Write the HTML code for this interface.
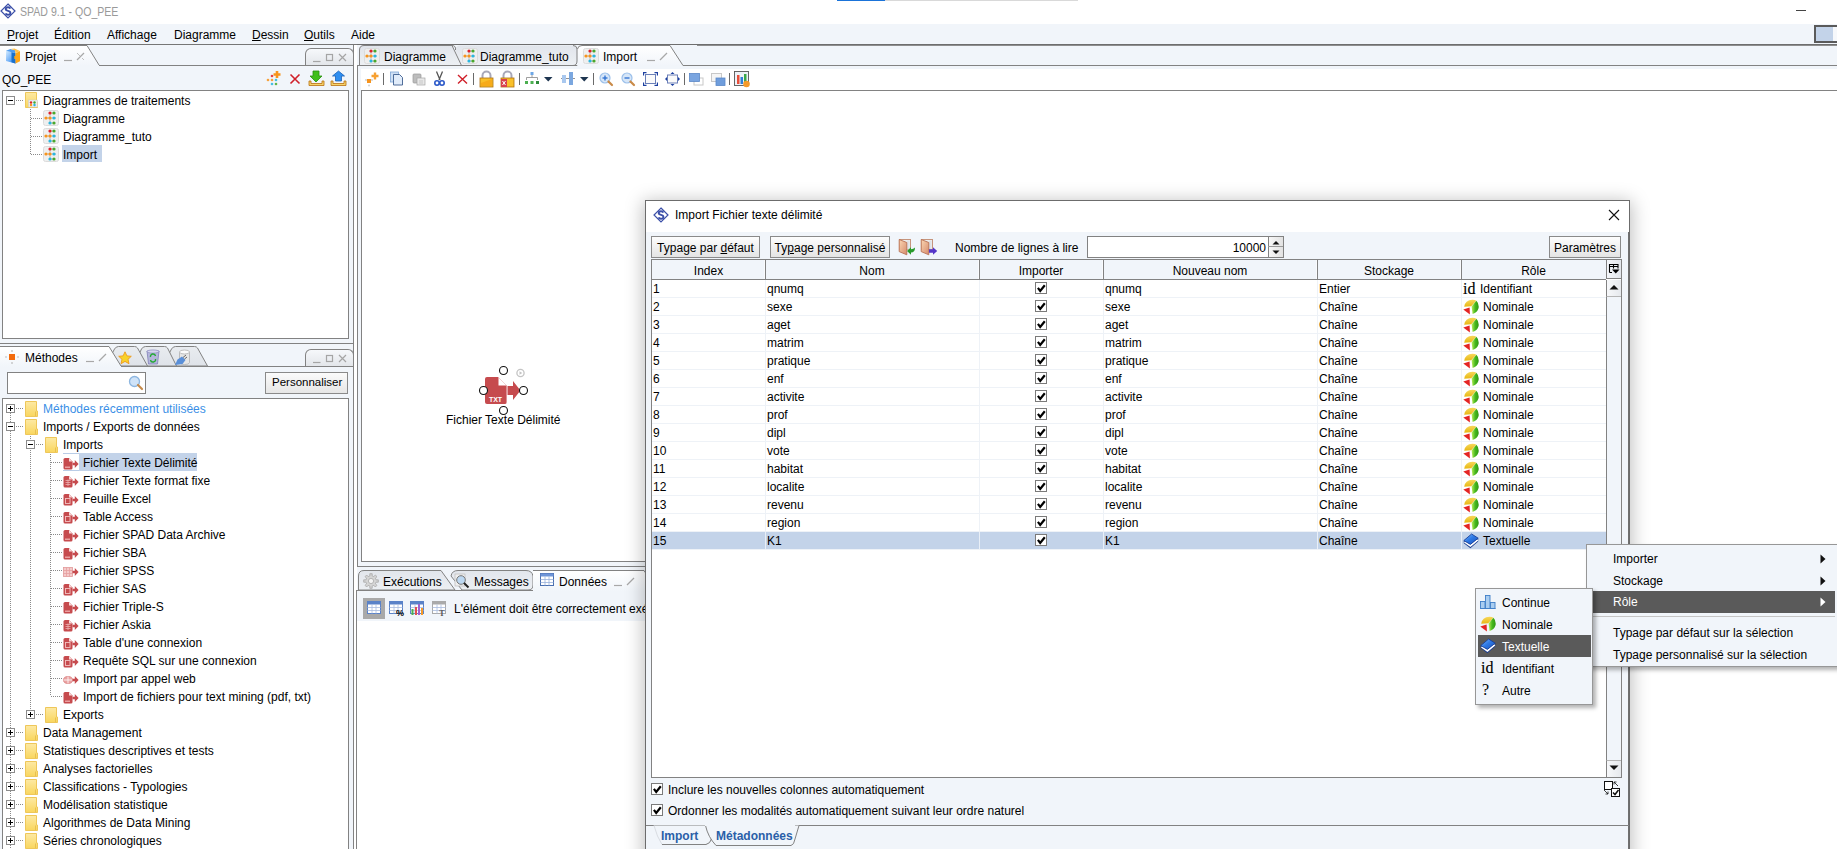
<!DOCTYPE html>
<html><head><meta charset="utf-8"><style>
html,body{margin:0;padding:0;}
body{width:1837px;height:849px;overflow:hidden;position:relative;background:#fff;font-family:"Liberation Sans", sans-serif;font-size:12px;color:#000;}
.t{position:absolute;white-space:nowrap;}
svg{display:block;}
</style></head><body>
<div style="position:absolute;left:0px;top:0px;width:1837px;height:24px;background:#fff"></div><svg style="position:absolute;left:0px;top:3px;" width="16" height="16" viewBox="0 0 16 16"><path d="M8 1 L15 8 L8 15 L1 8 Z" fill="#fff" stroke="#3b4fa8" stroke-width="1.2"/><path d="M10.3 5.6 Q9.8 4.3 8 4.3 Q5.7 4.3 5.7 6.1 Q5.7 7.5 8 7.9 Q10.4 8.3 10.4 10 Q10.4 11.8 8 11.8 Q6.1 11.8 5.6 10.4" fill="none" stroke="#3b4fa8" stroke-width="1.9"/></svg><div class="t" style="left:20px;top:4px;line-height:17px;color:#9a9a9a;font-size:12px;transform:scaleX(0.88);transform-origin:0 0;">SPAD 9.1 - QO_PEE</div><div style="position:absolute;left:837px;top:0px;width:48px;height:1px;background:#1a73d9"></div><div style="position:absolute;left:885px;top:0px;width:193px;height:1px;background:#d9d9d9"></div><div style="position:absolute;left:1796px;top:10px;width:10px;height:1px;background:#444"></div><div style="position:absolute;left:0px;top:24px;width:1837px;height:20px;background:#f1f5fa"></div><div class="t" style="left:7px;top:27px;line-height:17px;"><u>P</u>rojet</div><div class="t" style="left:54px;top:27px;line-height:17px;">Édition</div><div class="t" style="left:107px;top:27px;line-height:17px;">Affichage</div><div class="t" style="left:174px;top:27px;line-height:17px;">Diagramme</div><div class="t" style="left:252px;top:27px;line-height:17px;"><u>D</u>essin</div><div class="t" style="left:304px;top:27px;line-height:17px;"><u>O</u>utils</div><div class="t" style="left:351px;top:27px;line-height:17px;">Aide</div><div style="position:absolute;left:1814px;top:25px;width:23px;height:18px;background:#c3d3e9;border:2px solid #5a5a5a;border-right:none;box-sizing:border-box"></div><div style="position:absolute;left:1833px;top:27px;width:4px;height:14px;background:#f6f8fb"></div><div style="position:absolute;left:0px;top:44px;width:1837px;height:1px;background:#767676"></div><div style="position:absolute;left:0px;top:45px;width:353px;height:298px;background:#f1f5fa"></div><div style="position:absolute;left:0px;top:65px;width:353px;height:1px;background:#828282"></div><svg style="position:absolute;left:-1px;top:45px;" width="101" height="21" viewBox="0 0 101 21"><defs><linearGradient id="tg-145" x1="0" y1="0" x2="0" y2="1"><stop offset="0" stop-color="#fff"/><stop offset="1" stop-color="#f1f5fa"/></linearGradient></defs><path d="M0 0.5 H88 L100 20 V21 H0 Z" fill="url(#tg-145)"/><path d="M0 0.5 H88 L100 20" fill="none" stroke="#828282" stroke-width="1"/></svg><svg style="position:absolute;left:5px;top:48px;" width="16" height="16" viewBox="0 0 16 16"><defs><linearGradient id="cbg" x1="0" y1="0" x2="1" y2="1"><stop offset="0" stop-color="#d6ecff"/><stop offset="1" stop-color="#1f7ff0"/></linearGradient></defs><path d="M1 2.8L10.5 5.3V15.5L1 13Z" fill="url(#cbg)"/><path d="M6.5 4L10.5 5.3V15.5L6.5 14.3Z" fill="#1a70cc"/><path d="M10.5 5.3L15 3V13.2L10.5 15.5Z" fill="#ffa514"/><path d="M9.3 8H11.3V11H9.3Z" fill="#ffa514"/><path d="M1 2.8L5.5 1L10 2.3L10.5 5.3Z" fill="#4d9cf0"/><path d="M5.5 1L9.5 0.5L15 3L10.5 5.3L10 2.3Z" fill="#ffc04a"/></svg><div class="t" style="left:25px;top:49px;line-height:17px;">Projet</div><svg style="position:absolute;left:62px;top:50px;" width="26" height="14" viewBox="0 0 26 14"><path d="M2 10.5H10" stroke="#a8a8a8" stroke-width="1.2"/><path d="M15 10L22 3" stroke="#a8a8a8" stroke-width="1.2"/><path d="M15 3L18 6M20 8L22 10" stroke="#c0c0c0" stroke-width="1"/></svg><div style="position:absolute;left:305px;top:48px;width:49px;height:17px;box-sizing:border-box;border:1px solid #828282;border-bottom:none;border-radius:6px 6px 0 0;background:linear-gradient(#f6f8fb,#e3e6ea)"></div><svg style="position:absolute;left:305px;top:48px;" width="49" height="17" viewBox="0 0 49 17"><path d="M8 13.5H15.5" stroke="#a5a5a5" stroke-width="1.2"/><rect x="21.5" y="6.5" width="6" height="6" fill="none" stroke="#a5a5a5" stroke-width="1.2"/><path d="M34 6L41 13M41 6L34 13" stroke="#a5a5a5" stroke-width="1.2"/></svg><div style="position:absolute;left:353px;top:45px;width:1px;height:298px;background:#828282"></div><div class="t" style="left:2px;top:71px;line-height:18px;">QO_PEE</div><svg style="position:absolute;left:265px;top:70px;" width="17" height="17" viewBox="0 0 17 17"><g opacity="0.85"><circle cx="3" cy="10" r="1.3" fill="#f7941d"/><circle cx="7" cy="10" r="1.3" fill="#f7941d"/><circle cx="11" cy="10" r="1.3" fill="#29b6e0"/><circle cx="7" cy="14" r="1.3" fill="#29b6e0"/><circle cx="11" cy="14" r="1.3" fill="#49a82c"/><circle cx="7" cy="6" r="1.3" fill="#e0202a"/></g><path d="M12 1V8M8.5 4.5H15.5" stroke="#f7941d" stroke-width="2.6"/></svg><svg style="position:absolute;left:289px;top:73px;" width="12" height="12" viewBox="0 0 12 12"><path d="M1.5 1.5L10.5 10.5M10.5 1.5L1.5 10.5" stroke="#d0202a" stroke-width="1.6"/></svg><svg style="position:absolute;left:308px;top:70px;" width="17" height="17" viewBox="0 0 17 17"><path d="M5 1H11V6H14L8 12L2 6H5Z" fill="#3fbf1a" stroke="#2a8f10" stroke-width="0.8"/><path d="M1 11V15.5H16V11H14V13.5H3V11Z" fill="#f6d46a" stroke="#b76f10" stroke-width="0.8"/></svg><svg style="position:absolute;left:330px;top:70px;" width="17" height="17" viewBox="0 0 17 17"><path d="M8.5 1L14.5 6H11.5V11H5.5V6H2.5Z" fill="#2e8ef0" stroke="#1b62b8" stroke-width="0.8"/><path d="M1 11V15.5H16V11H14V13.5H3V11Z" fill="#f6d46a" stroke="#b76f10" stroke-width="0.8"/></svg><div style="position:absolute;left:2px;top:90px;width:347px;height:249px;background:#fff;border:1px solid #828282;box-sizing:border-box"></div><svg style="position:absolute;left:6px;top:96px;" width="9" height="9" viewBox="0 0 9 9"><rect x="0.5" y="0.5" width="8" height="8" fill="#fff" stroke="#8c8c8c"/><path d="M2 4.5H7" stroke="#000"/></svg><div style="position:absolute;left:16px;top:100px;width:8px;height:1px;background:repeating-linear-gradient(90deg,#8a8a8a 0 1px,transparent 1px 2px)"></div><svg style="position:absolute;left:25px;top:92px;" width="13" height="16" viewBox="0 0 13 16"><defs><linearGradient id="fg" x1="0" y1="0" x2="0" y2="1"><stop offset="0" stop-color="#fde9a4"/><stop offset="1" stop-color="#f9d65e"/></linearGradient></defs><path d="M0.5 0.5H11.5V10H12.5V15.5H0.5Z" fill="url(#fg)" stroke="#eec75a"/><path d="M10.5 10.5V15" stroke="#e8c050" stroke-width="1"/><rect x="3.5" y="8" width="9" height="7" fill="#eee" stroke="#ccc" stroke-width="0.5"/><circle cx="6" cy="10.5" r="1.2" fill="#e0202a"/><circle cx="9.5" cy="10.5" r="1.2" fill="#49a82c"/><circle cx="6" cy="13" r="1.2" fill="#f7941d"/><circle cx="9.5" cy="13" r="1.2" fill="#29b6e0"/></svg><div class="t" style="left:43px;top:92px;line-height:18px;">Diagrammes de traitements</div><div style="position:absolute;left:30px;top:109px;width:1px;height:46px;background:repeating-linear-gradient(180deg,#8a8a8a 0 1px,transparent 1px 2px)"></div><div style="position:absolute;left:31px;top:118px;width:11px;height:1px;background:repeating-linear-gradient(90deg,#8a8a8a 0 1px,transparent 1px 2px)"></div><svg style="position:absolute;left:43px;top:110px;" width="16" height="16" viewBox="0 0 16 16"><rect x="0.5" y="0.5" width="15" height="15" rx="2" fill="#efefef" stroke="#dcdcdc"/><path d="M3 8H13M7 3V13M7 3H11M7 13H11" stroke="#999" stroke-width="0.6"/><circle cx="7" cy="3" r="1.6" fill="#e0202a"/><circle cx="11" cy="3" r="1.6" fill="#49a82c"/><circle cx="3" cy="8" r="1.6" fill="#f7941d"/><circle cx="7" cy="8" r="1.6" fill="#f7941d"/><circle cx="11" cy="8" r="1.6" fill="#29b6e0"/><circle cx="7" cy="13" r="1.6" fill="#29b6e0"/><circle cx="11" cy="13" r="1.6" fill="#49a82c"/></svg><div class="t" style="left:63px;top:110px;line-height:18px;">Diagramme</div><div style="position:absolute;left:31px;top:136px;width:11px;height:1px;background:repeating-linear-gradient(90deg,#8a8a8a 0 1px,transparent 1px 2px)"></div><svg style="position:absolute;left:43px;top:128px;" width="16" height="16" viewBox="0 0 16 16"><rect x="0.5" y="0.5" width="15" height="15" rx="2" fill="#efefef" stroke="#dcdcdc"/><path d="M3 8H13M7 3V13M7 3H11M7 13H11" stroke="#999" stroke-width="0.6"/><circle cx="7" cy="3" r="1.6" fill="#e0202a"/><circle cx="11" cy="3" r="1.6" fill="#49a82c"/><circle cx="3" cy="8" r="1.6" fill="#f7941d"/><circle cx="7" cy="8" r="1.6" fill="#f7941d"/><circle cx="11" cy="8" r="1.6" fill="#29b6e0"/><circle cx="7" cy="13" r="1.6" fill="#29b6e0"/><circle cx="11" cy="13" r="1.6" fill="#49a82c"/></svg><div class="t" style="left:63px;top:128px;line-height:18px;">Diagramme_tuto</div><div style="position:absolute;left:31px;top:154px;width:11px;height:1px;background:repeating-linear-gradient(90deg,#8a8a8a 0 1px,transparent 1px 2px)"></div><svg style="position:absolute;left:43px;top:146px;" width="16" height="16" viewBox="0 0 16 16"><rect x="0.5" y="0.5" width="15" height="15" rx="2" fill="#efefef" stroke="#dcdcdc"/><path d="M3 8H13M7 3V13M7 3H11M7 13H11" stroke="#999" stroke-width="0.6"/><circle cx="7" cy="3" r="1.6" fill="#e0202a"/><circle cx="11" cy="3" r="1.6" fill="#49a82c"/><circle cx="3" cy="8" r="1.6" fill="#f7941d"/><circle cx="7" cy="8" r="1.6" fill="#f7941d"/><circle cx="11" cy="8" r="1.6" fill="#29b6e0"/><circle cx="7" cy="13" r="1.6" fill="#29b6e0"/><circle cx="11" cy="13" r="1.6" fill="#49a82c"/></svg><div style="position:absolute;left:62px;top:145px;width:40px;height:17px;background:#c3d3e9"></div><div class="t" style="left:63px;top:146px;line-height:18px;">Import</div><div style="position:absolute;left:0px;top:343px;width:353px;height:1px;background:#828282"></div><div style="position:absolute;left:0px;top:344px;width:353px;height:505px;background:#f1f5fa"></div><div style="position:absolute;left:353px;top:343px;width:1px;height:506px;background:#828282"></div><div style="position:absolute;left:0px;top:366px;width:353px;height:1px;background:#828282"></div><svg style="position:absolute;left:162px;top:346px;" width="47" height="21" viewBox="0 0 47 21"><defs><linearGradient id="tpdb" x1="0" y1="0" x2="0" y2="1"><stop offset="0" stop-color="#e9ecf0"/><stop offset="1" stop-color="#dfe3e9"/></linearGradient></defs><path d="M0.5 20 L9.5 3 Q11.0 0.5 13.5 0.5 H32.5 Q34.5 0.5 35.5 2 L45.5 20 Z" fill="url(#tpdb)" stroke="#828282" stroke-width="1"/></svg><svg style="position:absolute;left:133px;top:346px;" width="45" height="21" viewBox="0 0 45 21"><defs><linearGradient id="tprc" x1="0" y1="0" x2="0" y2="1"><stop offset="0" stop-color="#e9ecf0"/><stop offset="1" stop-color="#dfe3e9"/></linearGradient></defs><path d="M0.5 20 L8.5 3 Q10.0 0.5 12.5 0.5 H31.5 Q33.5 0.5 34.5 2 L43.5 20 Z" fill="url(#tprc)" stroke="#828282" stroke-width="1"/></svg><svg style="position:absolute;left:105px;top:346px;" width="44" height="21" viewBox="0 0 44 21"><defs><linearGradient id="tpst" x1="0" y1="0" x2="0" y2="1"><stop offset="0" stop-color="#e9ecf0"/><stop offset="1" stop-color="#dfe3e9"/></linearGradient></defs><path d="M0.5 20 L9.5 3 Q11.0 0.5 13.5 0.5 H29.5 Q31.5 0.5 32.5 2 L42.5 20 Z" fill="url(#tpst)" stroke="#828282" stroke-width="1"/></svg><svg style="position:absolute;left:-1px;top:346px;" width="123" height="21" viewBox="0 0 123 21"><defs><linearGradient id="tg-1346" x1="0" y1="0" x2="0" y2="1"><stop offset="0" stop-color="#fff"/><stop offset="1" stop-color="#f1f5fa"/></linearGradient></defs><path d="M0 0.5 H110 L122 20 V21 H0 Z" fill="url(#tg-1346)"/><path d="M0 0.5 H110 L122 20" fill="none" stroke="#828282" stroke-width="1"/></svg><svg style="position:absolute;left:4px;top:349px;" width="16" height="16" viewBox="0 0 16 16"><rect x="5" y="5" width="6" height="6" fill="#f36b0d"/><path d="M8 1V3M8 13V15M1 8H3M13 8H15" stroke="#bbb" stroke-width="1.2"/></svg><div class="t" style="left:25px;top:350px;line-height:17px;">Méthodes</div><svg style="position:absolute;left:84px;top:351px;" width="26" height="14" viewBox="0 0 26 14"><path d="M2 10.5H10" stroke="#a8a8a8" stroke-width="1.2"/><path d="M15 10L22 3" stroke="#a8a8a8" stroke-width="1.2"/></svg><svg style="position:absolute;left:118px;top:351px;" width="14" height="14" viewBox="0 0 14 14"><path d="M7 0.8L8.9 4.9L13.3 5.3L10 8.3L11 12.7L7 10.4L3 12.7L4 8.3L0.7 5.3L5.1 4.9Z" fill="#f8d22a" stroke="#ee9a1a" stroke-width="0.9"/></svg><svg style="position:absolute;left:146px;top:349px;" width="14" height="16" viewBox="0 0 14 16"><path d="M1 2H13L11.5 15H2.5Z" fill="#b5b5dc" stroke="#8080b8" stroke-width="0.8"/><ellipse cx="7" cy="2.5" rx="6" ry="1.6" fill="#d6d6ef" stroke="#8080b8" stroke-width="0.6"/><path d="M4.5 8A2.5 2.5 0 0 1 9.5 7M9.5 10A2.5 2.5 0 0 1 4.5 11" stroke="#22aa33" stroke-width="1.4" fill="none"/></svg><svg style="position:absolute;left:174px;top:349px;" width="18" height="17" viewBox="0 0 18 17"><path d="M5.5 3V13.5Q5.5 15.5 10.5 15.5Q15.5 15.5 15.5 13.5V3Z" fill="#e6e6e6" stroke="#b0b0b0" stroke-width="0.8"/><ellipse cx="10.5" cy="3" rx="5" ry="2" fill="#fbfbfb" stroke="#b0b0b0" stroke-width="0.8"/><path d="M1 16L3.5 10.5L8 7.5L11.5 11L8.5 15Z" fill="#5a8fd8"/><path d="M9 8.5L12 6M10.5 10L13 8" stroke="#666" stroke-width="1"/></svg><div style="position:absolute;left:305px;top:349px;width:49px;height:17px;box-sizing:border-box;border:1px solid #828282;border-bottom:none;border-radius:6px 6px 0 0;background:linear-gradient(#f6f8fb,#e3e6ea)"></div><svg style="position:absolute;left:305px;top:349px;" width="49" height="17" viewBox="0 0 49 17"><path d="M8 13.5H15.5" stroke="#a5a5a5" stroke-width="1.2"/><rect x="21.5" y="6.5" width="6" height="6" fill="none" stroke="#a5a5a5" stroke-width="1.2"/><path d="M34 6L41 13M41 6L34 13" stroke="#a5a5a5" stroke-width="1.2"/></svg><div style="position:absolute;left:7px;top:372px;width:139px;height:22px;background:#fff;border:1px solid #828282;box-sizing:border-box"></div><svg style="position:absolute;left:128px;top:375px;" width="16" height="16" viewBox="0 0 16 16"><circle cx="6.5" cy="6.5" r="5" fill="#cfe3f8" stroke="#8db6e0" stroke-width="1.3"/><path d="M10 10L14 14" stroke="#c58a4a" stroke-width="2.2" stroke-linecap="round"/></svg><div style="position:absolute;left:265px;top:372px;width:83px;height:22px;background:linear-gradient(#fbfbfb,#e6e6e6);border:1px solid #8a8a8a;box-sizing:border-box"></div><div class="t" style="left:272px;top:373px;line-height:18px;font-size:11.5px">Personnaliser</div><div style="position:absolute;left:2px;top:398px;width:347px;height:460px;background:#fff;border:1px solid #828282;box-sizing:border-box"></div><div style="position:absolute;left:10px;top:413px;width:1px;height:440px;background:repeating-linear-gradient(180deg,#8a8a8a 0 1px,transparent 1px 2px)"></div><div style="position:absolute;left:30px;top:434px;width:1px;height:280px;background:repeating-linear-gradient(180deg,#8a8a8a 0 1px,transparent 1px 2px)"></div><div style="position:absolute;left:50px;top:452px;width:1px;height:244px;background:repeating-linear-gradient(180deg,#8a8a8a 0 1px,transparent 1px 2px)"></div><svg style="position:absolute;left:6px;top:404px;" width="9" height="9" viewBox="0 0 9 9"><rect x="0.5" y="0.5" width="8" height="8" fill="#fff" stroke="#8c8c8c"/><path d="M2 4.5H7" stroke="#000"/><path d="M4.5 2V7" stroke="#000"/></svg><div style="position:absolute;left:16px;top:408px;width:8px;height:1px;background:repeating-linear-gradient(90deg,#8a8a8a 0 1px,transparent 1px 2px)"></div><svg style="position:absolute;left:25px;top:401px;" width="13" height="16" viewBox="0 0 13 16"><defs><linearGradient id="fg" x1="0" y1="0" x2="0" y2="1"><stop offset="0" stop-color="#fde9a4"/><stop offset="1" stop-color="#f9d65e"/></linearGradient></defs><path d="M0.5 0.5H11.5V10H12.5V15.5H0.5Z" fill="url(#fg)" stroke="#eec75a"/><path d="M10.5 10.5V15" stroke="#e8c050" stroke-width="1"/></svg><div class="t" style="left:43px;top:400px;line-height:18px;color:#3b8fe6">Méthodes récemment utilisées</div><svg style="position:absolute;left:6px;top:422px;" width="9" height="9" viewBox="0 0 9 9"><rect x="0.5" y="0.5" width="8" height="8" fill="#fff" stroke="#8c8c8c"/><path d="M2 4.5H7" stroke="#000"/></svg><div style="position:absolute;left:16px;top:426px;width:8px;height:1px;background:repeating-linear-gradient(90deg,#8a8a8a 0 1px,transparent 1px 2px)"></div><svg style="position:absolute;left:25px;top:419px;" width="13" height="16" viewBox="0 0 13 16"><defs><linearGradient id="fg" x1="0" y1="0" x2="0" y2="1"><stop offset="0" stop-color="#fde9a4"/><stop offset="1" stop-color="#f9d65e"/></linearGradient></defs><path d="M0.5 0.5H11.5V10H12.5V15.5H0.5Z" fill="url(#fg)" stroke="#eec75a"/><path d="M10.5 10.5V15" stroke="#e8c050" stroke-width="1"/></svg><div class="t" style="left:43px;top:418px;line-height:18px;">Imports / Exports de données</div><svg style="position:absolute;left:26px;top:440px;" width="9" height="9" viewBox="0 0 9 9"><rect x="0.5" y="0.5" width="8" height="8" fill="#fff" stroke="#8c8c8c"/><path d="M2 4.5H7" stroke="#000"/></svg><div style="position:absolute;left:36px;top:444px;width:8px;height:1px;background:repeating-linear-gradient(90deg,#8a8a8a 0 1px,transparent 1px 2px)"></div><svg style="position:absolute;left:45px;top:437px;" width="13" height="16" viewBox="0 0 13 16"><defs><linearGradient id="fg" x1="0" y1="0" x2="0" y2="1"><stop offset="0" stop-color="#fde9a4"/><stop offset="1" stop-color="#f9d65e"/></linearGradient></defs><path d="M0.5 0.5H11.5V10H12.5V15.5H0.5Z" fill="url(#fg)" stroke="#eec75a"/><path d="M10.5 10.5V15" stroke="#e8c050" stroke-width="1"/></svg><div class="t" style="left:63px;top:436px;line-height:18px;">Imports</div><div style="position:absolute;left:51px;top:462px;width:11px;height:1px;background:repeating-linear-gradient(90deg,#8a8a8a 0 1px,transparent 1px 2px)"></div><svg style="position:absolute;left:63px;top:456px;" width="16" height="14" viewBox="0 0 16 14"><path d="M0.5 3.5Q0.5 2 2 2H6L9.5 5.5V12Q9.5 13.5 8 13.5H2Q0.5 13.5 0.5 12Z" fill="#c64b4e"/><path d="M6 2V5.5H9.5Z" fill="#f8d6d6"/><path d="M9.5 6.8H11.8V4L15.6 8L11.8 12V9.2H9.5Z" fill="#c64b4e"/><rect x="2" y="10.5" width="5" height="1.5" fill="#e9a0a0"/></svg><div style="position:absolute;left:63px;top:453px;width:134px;height:18px;border-top:1px solid #b9cce6;border-bottom:1px solid #b9cce6;box-sizing:border-box"></div><div style="position:absolute;left:79px;top:453px;width:118px;height:18px;background:#c3d3e9"></div><div class="t" style="left:83px;top:454px;line-height:18px;">Fichier Texte Délimité</div><div style="position:absolute;left:51px;top:480px;width:11px;height:1px;background:repeating-linear-gradient(90deg,#8a8a8a 0 1px,transparent 1px 2px)"></div><svg style="position:absolute;left:63px;top:474px;" width="16" height="14" viewBox="0 0 16 14"><path d="M0.5 3.5Q0.5 2 2 2H6L9.5 5.5V12Q9.5 13.5 8 13.5H2Q0.5 13.5 0.5 12Z" fill="#c64b4e"/><path d="M6 2V5.5H9.5Z" fill="#f8d6d6"/><path d="M9.5 6.8H11.8V4L15.6 8L11.8 12V9.2H9.5Z" fill="#c64b4e"/><path d="M2.5 6.5H7.5M2.5 8.5H7.5M2.5 10.5H7.5M5 5.5V12" stroke="#eeb0b0" stroke-width="0.8"/></svg><div class="t" style="left:83px;top:472px;line-height:18px;">Fichier Texte format fixe</div><div style="position:absolute;left:51px;top:498px;width:11px;height:1px;background:repeating-linear-gradient(90deg,#8a8a8a 0 1px,transparent 1px 2px)"></div><svg style="position:absolute;left:63px;top:492px;" width="16" height="14" viewBox="0 0 16 14"><path d="M0.5 3.5Q0.5 2 2 2H6L9.5 5.5V12Q9.5 13.5 8 13.5H2Q0.5 13.5 0.5 12Z" fill="#c64b4e"/><path d="M6 2V5.5H9.5Z" fill="#f8d6d6"/><path d="M9.5 6.8H11.8V4L15.6 8L11.8 12V9.2H9.5Z" fill="#c64b4e"/><rect x="2.5" y="6.5" width="4.5" height="5" fill="none" stroke="#f3c0c0" stroke-width="0.9"/></svg><div class="t" style="left:83px;top:490px;line-height:18px;">Feuille Excel</div><div style="position:absolute;left:51px;top:516px;width:11px;height:1px;background:repeating-linear-gradient(90deg,#8a8a8a 0 1px,transparent 1px 2px)"></div><svg style="position:absolute;left:63px;top:510px;" width="16" height="14" viewBox="0 0 16 14"><path d="M0.5 3.5Q0.5 2 2 2H6L9.5 5.5V12Q9.5 13.5 8 13.5H2Q0.5 13.5 0.5 12Z" fill="#c64b4e"/><path d="M6 2V5.5H9.5Z" fill="#f8d6d6"/><path d="M9.5 6.8H11.8V4L15.6 8L11.8 12V9.2H9.5Z" fill="#c64b4e"/><rect x="2.5" y="6.5" width="4.5" height="5" fill="none" stroke="#f3c0c0" stroke-width="0.9"/></svg><div class="t" style="left:83px;top:508px;line-height:18px;">Table Access</div><div style="position:absolute;left:51px;top:534px;width:11px;height:1px;background:repeating-linear-gradient(90deg,#8a8a8a 0 1px,transparent 1px 2px)"></div><svg style="position:absolute;left:63px;top:528px;" width="16" height="14" viewBox="0 0 16 14"><path d="M0.5 3.5Q0.5 2 2 2H6L9.5 5.5V12Q9.5 13.5 8 13.5H2Q0.5 13.5 0.5 12Z" fill="#c64b4e"/><path d="M6 2V5.5H9.5Z" fill="#f8d6d6"/><path d="M9.5 6.8H11.8V4L15.6 8L11.8 12V9.2H9.5Z" fill="#c64b4e"/><rect x="2" y="10.5" width="5" height="1.5" fill="#e9a0a0"/></svg><div class="t" style="left:83px;top:526px;line-height:18px;">Fichier SPAD Data Archive</div><div style="position:absolute;left:51px;top:552px;width:11px;height:1px;background:repeating-linear-gradient(90deg,#8a8a8a 0 1px,transparent 1px 2px)"></div><svg style="position:absolute;left:63px;top:546px;" width="16" height="14" viewBox="0 0 16 14"><path d="M0.5 3.5Q0.5 2 2 2H6L9.5 5.5V12Q9.5 13.5 8 13.5H2Q0.5 13.5 0.5 12Z" fill="#c64b4e"/><path d="M6 2V5.5H9.5Z" fill="#f8d6d6"/><path d="M9.5 6.8H11.8V4L15.6 8L11.8 12V9.2H9.5Z" fill="#c64b4e"/><rect x="2" y="10.5" width="5" height="1.5" fill="#e9a0a0"/></svg><div class="t" style="left:83px;top:544px;line-height:18px;">Fichier SBA</div><div style="position:absolute;left:51px;top:570px;width:11px;height:1px;background:repeating-linear-gradient(90deg,#8a8a8a 0 1px,transparent 1px 2px)"></div><svg style="position:absolute;left:63px;top:564px;" width="16" height="14" viewBox="0 0 16 14"><rect x="0.5" y="3.5" width="9" height="9" fill="#f4caca" stroke="#e29a9a" stroke-width="0.8"/><path d="M0.5 6.5H9.5M0.5 9.5H9.5M3.5 3.5V12.5M6.5 3.5V12.5" stroke="#e6a0a0" stroke-width="0.8"/><path d="M9.5 6.8H11.8V4L15.6 8L11.8 12V9.2H9.5Z" fill="#c64b4e"/></svg><div class="t" style="left:83px;top:562px;line-height:18px;">Fichier SPSS</div><div style="position:absolute;left:51px;top:588px;width:11px;height:1px;background:repeating-linear-gradient(90deg,#8a8a8a 0 1px,transparent 1px 2px)"></div><svg style="position:absolute;left:63px;top:582px;" width="16" height="14" viewBox="0 0 16 14"><path d="M0.5 3.5Q0.5 2 2 2H6L9.5 5.5V12Q9.5 13.5 8 13.5H2Q0.5 13.5 0.5 12Z" fill="#c64b4e"/><path d="M6 2V5.5H9.5Z" fill="#f8d6d6"/><path d="M9.5 6.8H11.8V4L15.6 8L11.8 12V9.2H9.5Z" fill="#c64b4e"/><rect x="2.5" y="6.5" width="4.5" height="5" fill="none" stroke="#f3c0c0" stroke-width="0.9"/></svg><div class="t" style="left:83px;top:580px;line-height:18px;">Fichier SAS</div><div style="position:absolute;left:51px;top:606px;width:11px;height:1px;background:repeating-linear-gradient(90deg,#8a8a8a 0 1px,transparent 1px 2px)"></div><svg style="position:absolute;left:63px;top:600px;" width="16" height="14" viewBox="0 0 16 14"><path d="M0.5 3.5Q0.5 2 2 2H6L9.5 5.5V12Q9.5 13.5 8 13.5H2Q0.5 13.5 0.5 12Z" fill="#c64b4e"/><path d="M6 2V5.5H9.5Z" fill="#f8d6d6"/><path d="M9.5 6.8H11.8V4L15.6 8L11.8 12V9.2H9.5Z" fill="#c64b4e"/><rect x="2" y="10.5" width="5" height="1.5" fill="#e9a0a0"/></svg><div class="t" style="left:83px;top:598px;line-height:18px;">Fichier Triple-S</div><div style="position:absolute;left:51px;top:624px;width:11px;height:1px;background:repeating-linear-gradient(90deg,#8a8a8a 0 1px,transparent 1px 2px)"></div><svg style="position:absolute;left:63px;top:618px;" width="16" height="14" viewBox="0 0 16 14"><path d="M0.5 3.5Q0.5 2 2 2H6L9.5 5.5V12Q9.5 13.5 8 13.5H2Q0.5 13.5 0.5 12Z" fill="#c64b4e"/><path d="M6 2V5.5H9.5Z" fill="#f8d6d6"/><path d="M9.5 6.8H11.8V4L15.6 8L11.8 12V9.2H9.5Z" fill="#c64b4e"/><path d="M2.5 6.5H7.5M2.5 8.5H7.5M2.5 10.5H7.5M5 5.5V12" stroke="#eeb0b0" stroke-width="0.8"/></svg><div class="t" style="left:83px;top:616px;line-height:18px;">Fichier Askia</div><div style="position:absolute;left:51px;top:642px;width:11px;height:1px;background:repeating-linear-gradient(90deg,#8a8a8a 0 1px,transparent 1px 2px)"></div><svg style="position:absolute;left:63px;top:636px;" width="16" height="14" viewBox="0 0 16 14"><path d="M0.5 3.5Q0.5 2 2 2H6L9.5 5.5V12Q9.5 13.5 8 13.5H2Q0.5 13.5 0.5 12Z" fill="#c64b4e"/><path d="M6 2V5.5H9.5Z" fill="#f8d6d6"/><path d="M9.5 6.8H11.8V4L15.6 8L11.8 12V9.2H9.5Z" fill="#c64b4e"/><rect x="2.5" y="6.5" width="4.5" height="5" fill="none" stroke="#f3c0c0" stroke-width="0.9"/></svg><div class="t" style="left:83px;top:634px;line-height:18px;">Table d'une connexion</div><div style="position:absolute;left:51px;top:660px;width:11px;height:1px;background:repeating-linear-gradient(90deg,#8a8a8a 0 1px,transparent 1px 2px)"></div><svg style="position:absolute;left:63px;top:654px;" width="16" height="14" viewBox="0 0 16 14"><path d="M0.5 3.5Q0.5 2 2 2H6L9.5 5.5V12Q9.5 13.5 8 13.5H2Q0.5 13.5 0.5 12Z" fill="#c64b4e"/><path d="M6 2V5.5H9.5Z" fill="#f8d6d6"/><path d="M9.5 6.8H11.8V4L15.6 8L11.8 12V9.2H9.5Z" fill="#c64b4e"/><rect x="2.5" y="6.5" width="4.5" height="5" fill="none" stroke="#f3c0c0" stroke-width="0.9"/></svg><div class="t" style="left:83px;top:652px;line-height:18px;">Requête SQL sur une connexion</div><div style="position:absolute;left:51px;top:678px;width:11px;height:1px;background:repeating-linear-gradient(90deg,#8a8a8a 0 1px,transparent 1px 2px)"></div><svg style="position:absolute;left:63px;top:672px;" width="16" height="14" viewBox="0 0 16 14"><ellipse cx="5" cy="8" rx="4.5" ry="3.5" fill="#eaa2a2" stroke="#d98080" stroke-width="0.8"/><path d="M5 4.5V11.5M0.5 8H9.5" stroke="#fff" stroke-width="0.8"/><path d="M9.5 6.8H11.8V4L15.6 8L11.8 12V9.2H9.5Z" fill="#c64b4e"/></svg><div class="t" style="left:83px;top:670px;line-height:18px;">Import par appel web</div><div style="position:absolute;left:51px;top:696px;width:11px;height:1px;background:repeating-linear-gradient(90deg,#8a8a8a 0 1px,transparent 1px 2px)"></div><svg style="position:absolute;left:63px;top:690px;" width="16" height="14" viewBox="0 0 16 14"><path d="M0.5 3.5Q0.5 2 2 2H6L9.5 5.5V12Q9.5 13.5 8 13.5H2Q0.5 13.5 0.5 12Z" fill="#c64b4e"/><path d="M6 2V5.5H9.5Z" fill="#f8d6d6"/><path d="M9.5 6.8H11.8V4L15.6 8L11.8 12V9.2H9.5Z" fill="#c64b4e"/><rect x="2" y="10.5" width="5" height="1.5" fill="#e9a0a0"/></svg><div class="t" style="left:83px;top:688px;line-height:18px;">Import de fichiers pour text mining (pdf, txt)</div><svg style="position:absolute;left:26px;top:710px;" width="9" height="9" viewBox="0 0 9 9"><rect x="0.5" y="0.5" width="8" height="8" fill="#fff" stroke="#8c8c8c"/><path d="M2 4.5H7" stroke="#000"/><path d="M4.5 2V7" stroke="#000"/></svg><div style="position:absolute;left:36px;top:714px;width:8px;height:1px;background:repeating-linear-gradient(90deg,#8a8a8a 0 1px,transparent 1px 2px)"></div><svg style="position:absolute;left:45px;top:707px;" width="13" height="16" viewBox="0 0 13 16"><defs><linearGradient id="fg" x1="0" y1="0" x2="0" y2="1"><stop offset="0" stop-color="#fde9a4"/><stop offset="1" stop-color="#f9d65e"/></linearGradient></defs><path d="M0.5 0.5H11.5V10H12.5V15.5H0.5Z" fill="url(#fg)" stroke="#eec75a"/><path d="M10.5 10.5V15" stroke="#e8c050" stroke-width="1"/></svg><div class="t" style="left:63px;top:706px;line-height:18px;">Exports</div><svg style="position:absolute;left:6px;top:728px;" width="9" height="9" viewBox="0 0 9 9"><rect x="0.5" y="0.5" width="8" height="8" fill="#fff" stroke="#8c8c8c"/><path d="M2 4.5H7" stroke="#000"/><path d="M4.5 2V7" stroke="#000"/></svg><div style="position:absolute;left:16px;top:732px;width:8px;height:1px;background:repeating-linear-gradient(90deg,#8a8a8a 0 1px,transparent 1px 2px)"></div><svg style="position:absolute;left:25px;top:725px;" width="13" height="16" viewBox="0 0 13 16"><defs><linearGradient id="fg" x1="0" y1="0" x2="0" y2="1"><stop offset="0" stop-color="#fde9a4"/><stop offset="1" stop-color="#f9d65e"/></linearGradient></defs><path d="M0.5 0.5H11.5V10H12.5V15.5H0.5Z" fill="url(#fg)" stroke="#eec75a"/><path d="M10.5 10.5V15" stroke="#e8c050" stroke-width="1"/></svg><div class="t" style="left:43px;top:724px;line-height:18px;">Data Management</div><svg style="position:absolute;left:6px;top:746px;" width="9" height="9" viewBox="0 0 9 9"><rect x="0.5" y="0.5" width="8" height="8" fill="#fff" stroke="#8c8c8c"/><path d="M2 4.5H7" stroke="#000"/><path d="M4.5 2V7" stroke="#000"/></svg><div style="position:absolute;left:16px;top:750px;width:8px;height:1px;background:repeating-linear-gradient(90deg,#8a8a8a 0 1px,transparent 1px 2px)"></div><svg style="position:absolute;left:25px;top:743px;" width="13" height="16" viewBox="0 0 13 16"><defs><linearGradient id="fg" x1="0" y1="0" x2="0" y2="1"><stop offset="0" stop-color="#fde9a4"/><stop offset="1" stop-color="#f9d65e"/></linearGradient></defs><path d="M0.5 0.5H11.5V10H12.5V15.5H0.5Z" fill="url(#fg)" stroke="#eec75a"/><path d="M10.5 10.5V15" stroke="#e8c050" stroke-width="1"/></svg><div class="t" style="left:43px;top:742px;line-height:18px;">Statistiques descriptives et tests</div><svg style="position:absolute;left:6px;top:764px;" width="9" height="9" viewBox="0 0 9 9"><rect x="0.5" y="0.5" width="8" height="8" fill="#fff" stroke="#8c8c8c"/><path d="M2 4.5H7" stroke="#000"/><path d="M4.5 2V7" stroke="#000"/></svg><div style="position:absolute;left:16px;top:768px;width:8px;height:1px;background:repeating-linear-gradient(90deg,#8a8a8a 0 1px,transparent 1px 2px)"></div><svg style="position:absolute;left:25px;top:761px;" width="13" height="16" viewBox="0 0 13 16"><defs><linearGradient id="fg" x1="0" y1="0" x2="0" y2="1"><stop offset="0" stop-color="#fde9a4"/><stop offset="1" stop-color="#f9d65e"/></linearGradient></defs><path d="M0.5 0.5H11.5V10H12.5V15.5H0.5Z" fill="url(#fg)" stroke="#eec75a"/><path d="M10.5 10.5V15" stroke="#e8c050" stroke-width="1"/></svg><div class="t" style="left:43px;top:760px;line-height:18px;">Analyses factorielles</div><svg style="position:absolute;left:6px;top:782px;" width="9" height="9" viewBox="0 0 9 9"><rect x="0.5" y="0.5" width="8" height="8" fill="#fff" stroke="#8c8c8c"/><path d="M2 4.5H7" stroke="#000"/><path d="M4.5 2V7" stroke="#000"/></svg><div style="position:absolute;left:16px;top:786px;width:8px;height:1px;background:repeating-linear-gradient(90deg,#8a8a8a 0 1px,transparent 1px 2px)"></div><svg style="position:absolute;left:25px;top:779px;" width="13" height="16" viewBox="0 0 13 16"><defs><linearGradient id="fg" x1="0" y1="0" x2="0" y2="1"><stop offset="0" stop-color="#fde9a4"/><stop offset="1" stop-color="#f9d65e"/></linearGradient></defs><path d="M0.5 0.5H11.5V10H12.5V15.5H0.5Z" fill="url(#fg)" stroke="#eec75a"/><path d="M10.5 10.5V15" stroke="#e8c050" stroke-width="1"/></svg><div class="t" style="left:43px;top:778px;line-height:18px;">Classifications - Typologies</div><svg style="position:absolute;left:6px;top:800px;" width="9" height="9" viewBox="0 0 9 9"><rect x="0.5" y="0.5" width="8" height="8" fill="#fff" stroke="#8c8c8c"/><path d="M2 4.5H7" stroke="#000"/><path d="M4.5 2V7" stroke="#000"/></svg><div style="position:absolute;left:16px;top:804px;width:8px;height:1px;background:repeating-linear-gradient(90deg,#8a8a8a 0 1px,transparent 1px 2px)"></div><svg style="position:absolute;left:25px;top:797px;" width="13" height="16" viewBox="0 0 13 16"><defs><linearGradient id="fg" x1="0" y1="0" x2="0" y2="1"><stop offset="0" stop-color="#fde9a4"/><stop offset="1" stop-color="#f9d65e"/></linearGradient></defs><path d="M0.5 0.5H11.5V10H12.5V15.5H0.5Z" fill="url(#fg)" stroke="#eec75a"/><path d="M10.5 10.5V15" stroke="#e8c050" stroke-width="1"/></svg><div class="t" style="left:43px;top:796px;line-height:18px;">Modélisation statistique</div><svg style="position:absolute;left:6px;top:818px;" width="9" height="9" viewBox="0 0 9 9"><rect x="0.5" y="0.5" width="8" height="8" fill="#fff" stroke="#8c8c8c"/><path d="M2 4.5H7" stroke="#000"/><path d="M4.5 2V7" stroke="#000"/></svg><div style="position:absolute;left:16px;top:822px;width:8px;height:1px;background:repeating-linear-gradient(90deg,#8a8a8a 0 1px,transparent 1px 2px)"></div><svg style="position:absolute;left:25px;top:815px;" width="13" height="16" viewBox="0 0 13 16"><defs><linearGradient id="fg" x1="0" y1="0" x2="0" y2="1"><stop offset="0" stop-color="#fde9a4"/><stop offset="1" stop-color="#f9d65e"/></linearGradient></defs><path d="M0.5 0.5H11.5V10H12.5V15.5H0.5Z" fill="url(#fg)" stroke="#eec75a"/><path d="M10.5 10.5V15" stroke="#e8c050" stroke-width="1"/></svg><div class="t" style="left:43px;top:814px;line-height:18px;">Algorithmes de Data Mining</div><svg style="position:absolute;left:6px;top:836px;" width="9" height="9" viewBox="0 0 9 9"><rect x="0.5" y="0.5" width="8" height="8" fill="#fff" stroke="#8c8c8c"/><path d="M2 4.5H7" stroke="#000"/><path d="M4.5 2V7" stroke="#000"/></svg><div style="position:absolute;left:16px;top:840px;width:8px;height:1px;background:repeating-linear-gradient(90deg,#8a8a8a 0 1px,transparent 1px 2px)"></div><svg style="position:absolute;left:25px;top:833px;" width="13" height="16" viewBox="0 0 13 16"><defs><linearGradient id="fg" x1="0" y1="0" x2="0" y2="1"><stop offset="0" stop-color="#fde9a4"/><stop offset="1" stop-color="#f9d65e"/></linearGradient></defs><path d="M0.5 0.5H11.5V10H12.5V15.5H0.5Z" fill="url(#fg)" stroke="#eec75a"/><path d="M10.5 10.5V15" stroke="#e8c050" stroke-width="1"/></svg><div class="t" style="left:43px;top:832px;line-height:18px;">Séries chronologiques</div><div style="position:absolute;left:357px;top:45px;width:1480px;height:521px;background:#f1f5fa"></div><div style="position:absolute;left:357px;top:44px;width:1480px;height:1px;background:#6e6e6e"></div><div style="position:absolute;left:357px;top:65px;width:1480px;height:1px;background:#828282"></div><div style="position:absolute;left:357px;top:45px;width:1px;height:521px;background:#828282"></div><div style="position:absolute;left:363px;top:45px;width:1474px;height:1px;background:#8e8e8e"></div><svg style="position:absolute;left:357px;top:44px;" width="340" height="23" viewBox="0 0 340 23"><defs><linearGradient id="cti" x1="0" y1="0" x2="0" y2="1"><stop offset="0" stop-color="#e1e5eb"/><stop offset="1" stop-color="#edf0f4"/></linearGradient><linearGradient id="cta" x1="0" y1="0" x2="0" y2="1"><stop offset="0" stop-color="#ffffff"/><stop offset="1" stop-color="#f1f5fa"/></linearGradient></defs><rect x="0" y="1" width="340" height="20.5" fill="#f1f5fa"/><path d="M2.5 21.5 V6 Q2.5 1.5 7 1.5 H95 L104.5 21.5 Z" fill="url(#cti)"/><path d="M98 6 Q99 1.5 103 1.5 H216 Q220 1.5 220 5 V17 Q220 21.5 216 21.5 H104.5 Z" fill="url(#cti)"/><path d="M220.5 5 Q221 1.5 225 1.5 H313 L326 21.5 V22 H220.5 Z" fill="url(#cta)"/><path d="M2.5 21.5 V6 Q2.5 1.5 7 1.5 H95 L104.5 21.5" fill="none" stroke="#828282"/><path d="M95 1.5 Q99 1.5 98.5 6" fill="none" stroke="#828282"/><path d="M216 1.5 Q220 1.5 220 5 V17 Q220 21.5 216 21.5" fill="none" stroke="#828282"/><path d="M220.5 5 Q221 1.5 225 1.5 H313 L326 21.5 H340" fill="none" stroke="#828282"/><path d="M0 21.5 H220" stroke="#828282"/></svg><svg style="position:absolute;left:364px;top:48px;" width="16" height="16" viewBox="0 0 16 16"><rect x="0.5" y="0.5" width="15" height="15" rx="2" fill="#efefef" stroke="#dcdcdc"/><path d="M3 8H13M7 3V13M7 3H11M7 13H11" stroke="#999" stroke-width="0.6"/><circle cx="7" cy="3" r="1.6" fill="#e0202a"/><circle cx="11" cy="3" r="1.6" fill="#49a82c"/><circle cx="3" cy="8" r="1.6" fill="#f7941d"/><circle cx="7" cy="8" r="1.6" fill="#f7941d"/><circle cx="11" cy="8" r="1.6" fill="#29b6e0"/><circle cx="7" cy="13" r="1.6" fill="#29b6e0"/><circle cx="11" cy="13" r="1.6" fill="#49a82c"/></svg><div class="t" style="left:384px;top:49px;line-height:17px;">Diagramme</div><svg style="position:absolute;left:462px;top:48px;" width="16" height="16" viewBox="0 0 16 16"><rect x="0.5" y="0.5" width="15" height="15" rx="2" fill="#efefef" stroke="#dcdcdc"/><path d="M3 8H13M7 3V13M7 3H11M7 13H11" stroke="#999" stroke-width="0.6"/><circle cx="7" cy="3" r="1.6" fill="#e0202a"/><circle cx="11" cy="3" r="1.6" fill="#49a82c"/><circle cx="3" cy="8" r="1.6" fill="#f7941d"/><circle cx="7" cy="8" r="1.6" fill="#f7941d"/><circle cx="11" cy="8" r="1.6" fill="#29b6e0"/><circle cx="7" cy="13" r="1.6" fill="#29b6e0"/><circle cx="11" cy="13" r="1.6" fill="#49a82c"/></svg><div class="t" style="left:480px;top:49px;line-height:17px;">Diagramme_tuto</div><svg style="position:absolute;left:583px;top:48px;" width="16" height="16" viewBox="0 0 16 16"><rect x="0.5" y="0.5" width="15" height="15" rx="2" fill="#efefef" stroke="#dcdcdc"/><path d="M3 8H13M7 3V13M7 3H11M7 13H11" stroke="#999" stroke-width="0.6"/><circle cx="7" cy="3" r="1.6" fill="#e0202a"/><circle cx="11" cy="3" r="1.6" fill="#49a82c"/><circle cx="3" cy="8" r="1.6" fill="#f7941d"/><circle cx="7" cy="8" r="1.6" fill="#f7941d"/><circle cx="11" cy="8" r="1.6" fill="#29b6e0"/><circle cx="7" cy="13" r="1.6" fill="#29b6e0"/><circle cx="11" cy="13" r="1.6" fill="#49a82c"/></svg><div class="t" style="left:603px;top:49px;line-height:17px;">Import</div><svg style="position:absolute;left:645px;top:50px;" width="26" height="14" viewBox="0 0 26 14"><path d="M2 10.5H10" stroke="#a8a8a8" stroke-width="1.2"/><path d="M15 10L22 3" stroke="#a8a8a8" stroke-width="1.2"/></svg><div style="position:absolute;left:361px;top:69px;width:1476px;height:21px;background:#fff"></div><div style="position:absolute;left:361px;top:90px;width:1476px;height:472px;background:#fff;border:1px solid #828282;border-right:none;box-sizing:border-box"></div><div style="position:absolute;left:357px;top:566px;width:1480px;height:1px;background:#828282"></div><svg style="position:absolute;left:364px;top:71px;" width="17" height="17" viewBox="0 0 17 17"><circle cx="2" cy="9" r="0.9" fill="#ccc"/><circle cx="5" cy="14.5" r="0.9" fill="#ccc"/><circle cx="8" cy="9" r="0.9" fill="#ccc"/><rect x="3" y="8" width="4" height="4" fill="#f7941d"/><path d="M11 1.5V8.5M7.5 5H14.5" stroke="#f7a030" stroke-width="2.4"/></svg><div style="position:absolute;left:383px;top:73px;width:1px;height:12px;background:#6a6a6a"></div><svg style="position:absolute;left:390px;top:71px;" width="14" height="15" viewBox="0 0 14 15"><rect x="0.5" y="1" width="8" height="10" fill="#cfe0f4" stroke="#7ea6d6" stroke-width="0.8"/><path d="M3.5 3.5H9.5L12.5 6.5V14H3.5Z" fill="#e1ecfa" stroke="#3e5f8e" stroke-width="0.9"/></svg><svg style="position:absolute;left:412px;top:72px;" width="14" height="14" viewBox="0 0 14 14"><rect x="1" y="2" width="8" height="9" rx="1" fill="#bdbdbd" stroke="#9a9a9a" stroke-width="0.7"/><rect x="5" y="6" width="8" height="7" fill="#e8e8e8" stroke="#a5a5a5" stroke-width="0.7"/><path d="M7 9H11M7 11H11" stroke="#bbb" stroke-width="0.7"/></svg><svg style="position:absolute;left:434px;top:71px;" width="11" height="15" viewBox="0 0 11 15"><path d="M2.5 0.5L6 9M8.5 0.5L5 9" stroke="#555" stroke-width="1.3"/><circle cx="3" cy="12" r="2.2" fill="none" stroke="#2a58c8" stroke-width="1.6"/><circle cx="8" cy="12" r="2.2" fill="none" stroke="#2a58c8" stroke-width="1.6"/></svg><svg style="position:absolute;left:457px;top:74px;" width="11" height="10" viewBox="0 0 11 10"><path d="M1 1L10 9.5M10 1L1 9.5" stroke="#d0202a" stroke-width="1.4"/></svg><div style="position:absolute;left:473px;top:73px;width:1px;height:12px;background:#6a6a6a"></div><svg style="position:absolute;left:479px;top:70px;" width="15" height="18" viewBox="0 0 15 18"><path d="M3.5 8V5.5A4 4 0 0 1 11.5 5.5V8" fill="none" stroke="#a8a8b8" stroke-width="2"/><rect x="1" y="8" width="13" height="9" fill="#f9c02a" stroke="#b07010" stroke-width="0.8"/><path d="M2 13L13 9V16H2Z" fill="#f59d10" opacity="0.6"/></svg><svg style="position:absolute;left:500px;top:70px;" width="15" height="18" viewBox="0 0 15 18"><path d="M3.5 8V5.5A4 4 0 0 1 11.5 5.5V8" fill="none" stroke="#a8a8b8" stroke-width="2"/><rect x="1" y="8" width="13" height="9" fill="#f9c02a" stroke="#b07010" stroke-width="0.8"/><rect x="1" y="9" width="6" height="8" fill="#d8424c"/><path d="M2.5 11L5.5 15M5.5 11L2.5 15" stroke="#fff" stroke-width="1"/></svg><div style="position:absolute;left:519px;top:73px;width:1px;height:12px;background:#6a6a6a"></div><svg style="position:absolute;left:524px;top:71px;" width="17" height="16" viewBox="0 0 17 16"><rect x="6.5" y="1" width="3" height="3" fill="#6ea7e6"/><path d="M8 4V6.5M2.5 9V6.5H13.5V9" stroke="#888" stroke-width="0.8" fill="none"/><rect x="1" y="10" width="3" height="3" fill="#4caf50"/><rect x="6.5" y="10" width="3" height="3" fill="#4caf50"/><rect x="12" y="10" width="3" height="3" fill="#2e8b3a"/></svg><svg style="position:absolute;left:544px;top:77px;" width="9" height="5" viewBox="0 0 9 5"><path d="M0 0H8.5L4.25 4.5Z" fill="#1e3550"/></svg><svg style="position:absolute;left:561px;top:71px;" width="14" height="15" viewBox="0 0 14 15"><path d="M0 7.5H14" stroke="#777" stroke-width="0.8"/><rect x="1" y="4" width="4" height="8" fill="#a9c8ef"/><rect x="8" y="1" width="4" height="13" fill="#7ba7df"/></svg><svg style="position:absolute;left:580px;top:77px;" width="9" height="5" viewBox="0 0 9 5"><path d="M0 0H8.5L4.25 4.5Z" fill="#1e3550"/></svg><div style="position:absolute;left:593px;top:73px;width:1px;height:12px;background:#6a6a6a"></div><svg style="position:absolute;left:599px;top:72px;" width="15" height="15" viewBox="0 0 15 15"><circle cx="6" cy="6" r="5" fill="#d6e6f8" stroke="#9cc0ea" stroke-width="1.2"/><path d="M3.5 6H8.5" stroke="#2a6fd0" stroke-width="1.3"/><path d="M9.5 9.5L13 13" stroke="#c98a48" stroke-width="2.2" stroke-linecap="round"/><path d="M6 3.5V8.5" stroke="#2a6fd0" stroke-width="1.3"/></svg><svg style="position:absolute;left:621px;top:72px;" width="15" height="15" viewBox="0 0 15 15"><circle cx="6" cy="6" r="5" fill="#d6e6f8" stroke="#9cc0ea" stroke-width="1.2"/><path d="M3.5 6H8.5" stroke="#2a6fd0" stroke-width="1.3"/><path d="M9.5 9.5L13 13" stroke="#c98a48" stroke-width="2.2" stroke-linecap="round"/></svg><svg style="position:absolute;left:643px;top:72px;" width="15" height="14" viewBox="0 0 15 14"><rect x="2.5" y="2.5" width="10" height="9" fill="#fafafa" stroke="#6a7fb8" stroke-width="1"/><path d="M0.5 3.5V0.5H3.5M11.5 0.5H14.5V3.5M14.5 10.5V13.5H11.5M3.5 13.5H0.5V10.5" stroke="#1b3fa0" stroke-width="1.3" fill="none"/></svg><svg style="position:absolute;left:665px;top:72px;" width="15" height="14" viewBox="0 0 15 14"><rect x="2.5" y="3" width="10" height="8" fill="#fafafa" stroke="#6a7fb8" stroke-width="1"/><path d="M7.5 0L5.5 2H9.5ZM7.5 14L5.5 12H9.5ZM0 7L2 5V9ZM15 7L13 5V9Z" fill="#1b3fa0"/></svg><div style="position:absolute;left:684px;top:73px;width:1px;height:12px;background:#6a6a6a"></div><svg style="position:absolute;left:689px;top:73px;" width="15" height="13" viewBox="0 0 15 13"><rect x="5" y="5" width="9" height="7" fill="#fff" stroke="#c8c8c8"/><rect x="0.5" y="0.5" width="10" height="8" fill="#7aa5e0" stroke="#5b88c8" stroke-width="0.8"/></svg><svg style="position:absolute;left:711px;top:73px;" width="15" height="13" viewBox="0 0 15 13"><rect x="0.5" y="0.5" width="10" height="8" fill="#f5f5f5" stroke="#c8c8c8"/><rect x="5" y="5" width="9" height="7.5" fill="#6f9ddc" stroke="#5b88c8" stroke-width="0.8"/></svg><div style="position:absolute;left:729px;top:73px;width:1px;height:12px;background:#6a6a6a"></div><svg style="position:absolute;left:734px;top:71px;" width="17" height="17" viewBox="0 0 17 17"><rect x="0.5" y="0.5" width="14" height="14" fill="#eef2f8" stroke="#555" stroke-width="0.9"/><rect x="3" y="4" width="2.5" height="9" fill="#e84e3a"/><rect x="6.5" y="6" width="2.5" height="7" fill="#2f7fd8"/><rect x="10" y="3" width="2.5" height="10" fill="#3aa84a"/><circle cx="12.5" cy="13" r="3.3" fill="#f59a2a"/></svg><svg style="position:absolute;left:470px;top:360px;" width="60" height="60" viewBox="0 0 60 60"><path d="M17 17H28L37 26V42Q37 44 35 44H17Q15 44 15 42V19Q15 17 17 17Z" fill="#c64b4e"/><path d="M28.5 17.5V25.5H36.5Z" fill="#fff"/><path d="M37 26V44" stroke="#fff" stroke-width="0.8"/><path d="M37.5 26H43V21L50.5 30.5L43 40V35H37.5Z" fill="#c64b4e"/><text x="25.5" y="42" font-family="Liberation Sans" font-weight="bold" font-size="7" fill="#fff" text-anchor="middle">TXT</text><circle cx="33.5" cy="10.5" r="4" fill="#fff" stroke="#111" stroke-width="1.1"/><circle cx="33.5" cy="50.5" r="4" fill="none" stroke="#111" stroke-width="1.1"/><circle cx="13.5" cy="30.5" r="4" fill="#fff" stroke="#111" stroke-width="1.1"/><circle cx="53.5" cy="30.5" r="4" fill="#fff" stroke="#111" stroke-width="1.1"/><circle cx="50.5" cy="13" r="3.6" fill="#fff" stroke="#c4c4c4" stroke-width="1.3"/><path d="M49.5 11.2V14.8L52.3 13Z" fill="#c4c4c4"/></svg><div class="t" style="left:446px;top:411px;line-height:18px;">Fichier Texte Délimité</div><div style="position:absolute;left:357px;top:567px;width:1480px;height:282px;background:#f1f5fa"></div><div style="position:absolute;left:356px;top:590px;width:1px;height:259px;background:#828282"></div><div style="position:absolute;left:357px;top:590px;width:1480px;height:1px;background:#828282"></div><svg style="position:absolute;left:358px;top:570px;" width="98" height="21" viewBox="0 0 98 21"><defs><linearGradient id="bt1" x1="0" y1="0" x2="0" y2="1"><stop offset="0" stop-color="#e2e6ec"/><stop offset="1" stop-color="#eceff3"/></linearGradient></defs><path d="M0.5 20V6Q0.5 0.5 6 0.5H83L97 20Z" fill="url(#bt1)" stroke="#828282"/></svg><svg style="position:absolute;left:448px;top:570px;" width="90" height="21" viewBox="0 0 90 21"><defs><linearGradient id="bt2" x1="0" y1="0" x2="0" y2="1"><stop offset="0" stop-color="#e2e6ec"/><stop offset="1" stop-color="#eceff3"/></linearGradient></defs><path d="M3 6Q4 0.5 10 0.5H78Q84 0.5 85 6V15Q85 20 80 20H14Z" fill="url(#bt2)" stroke="#828282"/></svg><svg style="position:absolute;left:533px;top:570px;" width="125" height="21" viewBox="0 0 125 21"><defs><linearGradient id="tg533570" x1="0" y1="0" x2="0" y2="1"><stop offset="0" stop-color="#fff"/><stop offset="1" stop-color="#f1f5fa"/></linearGradient></defs><path d="M0 0.5 H111 L124 20 V21 H0 Z" fill="url(#tg533570)"/><path d="M0 0.5 H111 L124 20" fill="none" stroke="#828282" stroke-width="1"/></svg><svg style="position:absolute;left:363px;top:573px;" width="16" height="16" viewBox="0 0 16 16"><path d="M13.07 6.87 L15.31 6.82 L15.31 9.18 L13.07 9.13 L12.39 10.79 L14.00 12.33 L12.33 14.00 L10.79 12.39 L9.13 13.07 L9.18 15.31 L6.82 15.31 L6.87 13.07 L5.21 12.39 L3.67 14.00 L2.00 12.33 L3.61 10.79 L2.93 9.13 L0.69 9.18 L0.69 6.82 L2.93 6.87 L3.61 5.21 L2.00 3.67 L3.67 2.00 L5.21 3.61 L6.87 2.93 L6.82 0.69 L9.18 0.69 L9.13 2.93 L10.79 3.61 L12.33 2.00 L14.00 3.67 L12.39 5.21Z" fill="#d4d4d4" stroke="#a8a8a8" stroke-width="0.8"/><circle cx="8" cy="8" r="2.6" fill="#f4f4f4" stroke="#a8a8a8" stroke-width="0.8"/></svg><div class="t" style="left:383px;top:574px;line-height:17px;">Exécutions</div><svg style="position:absolute;left:454px;top:573px;" width="16" height="16" viewBox="0 0 16 16"><rect x="1" y="1" width="10" height="12" fill="#eee" stroke="#bbb" stroke-width="0.7"/><circle cx="7" cy="7" r="4.3" fill="#bcd8f2" stroke="#777" stroke-width="1"/><path d="M10 10L14.5 14.5" stroke="#222" stroke-width="2"/></svg><div class="t" style="left:474px;top:574px;line-height:17px;">Messages</div><svg style="position:absolute;left:540px;top:573px;" width="15" height="14" viewBox="0 0 15 14"><rect x="0.5" y="0.5" width="13" height="12" fill="#fff" stroke="#4a6fb0"/><rect x="0.5" y="0.5" width="13" height="3" fill="#6e95d8"/><path d="M0.5 6.5H13.5M0.5 9.5H13.5M5 3.5V12.5M9 3.5V12.5" stroke="#9bb3dc" stroke-width="0.8"/></svg><div class="t" style="left:559px;top:574px;line-height:17px;">Données</div><svg style="position:absolute;left:612px;top:575px;" width="26" height="14" viewBox="0 0 26 14"><path d="M2 10.5H10" stroke="#a8a8a8" stroke-width="1.2"/><path d="M15 10L22 3" stroke="#a8a8a8" stroke-width="1.2"/></svg><div style="position:absolute;left:363px;top:598px;width:22px;height:21px;background:#a9a9a9"></div><svg style="position:absolute;left:367px;top:601px;" width="16" height="15" viewBox="0 0 16 15"><rect x="0.5" y="0.5" width="13" height="12" fill="#fff" stroke="#5a82c8"/><rect x="0.5" y="0.5" width="13" height="3" fill="#5a82c8"/><path d="M0.5 6.5H13.5M0.5 9.5H13.5M5 3.5V12.5M9 3.5V12.5" stroke="#a9bde0" stroke-width="0.8"/></svg><svg style="position:absolute;left:389px;top:601px;" width="16" height="15" viewBox="0 0 16 15"><rect x="0.5" y="0.5" width="13" height="12" fill="#fff" stroke="#5a82c8"/><rect x="0.5" y="0.5" width="13" height="3" fill="#5a82c8"/><path d="M0.5 6.5H13.5M0.5 9.5H13.5M5 3.5V12.5M9 3.5V12.5" stroke="#a9bde0" stroke-width="0.8"/><text x="11" y="14.5" font-family="Liberation Sans" font-weight="bold" font-size="9" fill="#000" text-anchor="middle">%</text></svg><svg style="position:absolute;left:410px;top:601px;" width="16" height="15" viewBox="0 0 16 15"><rect x="0.5" y="0.5" width="13" height="12" fill="#fff" stroke="#5a82c8"/><rect x="0.5" y="0.5" width="13" height="3" fill="#5a82c8"/><path d="M0.5 6.5H13.5M0.5 9.5H13.5M5 3.5V12.5M9 3.5V12.5" stroke="#a9bde0" stroke-width="0.8"/><rect x="1.5" y="8" width="2" height="6" fill="#4caf50"/><rect x="5" y="6" width="2" height="8" fill="#e05050"/><rect x="8" y="3" width="2" height="11" fill="#a060d0"/><rect x="11" y="7" width="2" height="7" fill="#f59a2a"/></svg><svg style="position:absolute;left:432px;top:601px;" width="16" height="15" viewBox="0 0 16 15"><rect x="0.5" y="0.5" width="13" height="12" fill="#fff" stroke="#aaa"/><rect x="0.5" y="0.5" width="13" height="3" fill="#aaa"/><path d="M0.5 6.5H13.5M0.5 9.5H13.5M5 3.5V12.5M9 3.5V12.5" stroke="#a9bde0" stroke-width="0.8"/><text x="10" y="14.5" font-family="Liberation Serif" font-weight="bold" font-size="8" fill="#555" text-anchor="middle">T</text></svg><div class="t" style="left:454px;top:600px;line-height:18px;">L'élément doit être correctement exécuté</div><div style="position:absolute;left:357px;top:621px;width:1480px;height:228px;background:#fff"></div><div style="position:absolute;left:645px;top:200px;width:985px;height:700px;background:#f1f5fa;border:1px solid #6c6c6c;box-sizing:border-box;box-shadow:0 3px 17px 2px rgba(0,0,0,0.25)"></div><div style="position:absolute;left:646px;top:201px;width:983px;height:31px;background:#fff"></div><div style="position:absolute;left:1628px;top:232px;width:1px;height:617px;background:#707070"></div><svg style="position:absolute;left:653px;top:207px;" width="16" height="16" viewBox="0 0 16 16"><path d="M8 1 L15 8 L8 15 L1 8 Z" fill="#fff" stroke="#3b4fa8" stroke-width="1.2"/><path d="M10.3 5.6 Q9.8 4.3 8 4.3 Q5.7 4.3 5.7 6.1 Q5.7 7.5 8 7.9 Q10.4 8.3 10.4 10 Q10.4 11.8 8 11.8 Q6.1 11.8 5.6 10.4" fill="none" stroke="#3b4fa8" stroke-width="1.9"/></svg><div class="t" style="left:675px;top:206px;line-height:18px;">Import Fichier texte délimité</div><svg style="position:absolute;left:1608px;top:209px;" width="12" height="12" viewBox="0 0 12 12"><path d="M1 1L11 11M11 1L1 11" stroke="#111" stroke-width="1.1"/></svg><div style="position:absolute;left:651px;top:236px;width:109px;height:22px;box-sizing:border-box;border:1px solid #8a8a8a;background:linear-gradient(#fdfdfd,#e4e4e4);"></div><div class="t" style="left:651px;top:237px;width:109px;text-align:center;line-height:22px">Typage par <u>d</u>éfaut</div><div style="position:absolute;left:770px;top:236px;width:120px;height:22px;box-sizing:border-box;border:1px solid #8a8a8a;background:linear-gradient(#fdfdfd,#e4e4e4);"></div><div class="t" style="left:770px;top:237px;width:120px;text-align:center;line-height:22px">Ty<u>p</u>age personnalisé</div><svg style="position:absolute;left:898px;top:238px;" width="18" height="18" viewBox="0 0 18 18"><defs><linearGradient id="bkg" x1="0" y1="0" x2="1" y2="1"><stop offset="0" stop-color="#fbd7b3"/><stop offset="1" stop-color="#d58a6c"/></linearGradient></defs><rect x="1.5" y="1.5" width="11" height="10" fill="#eee" stroke="#c08a70" stroke-width="0.9"/><rect x="9" y="2.5" width="2.5" height="9" fill="#dfe3e8"/><path d="M1.2 1.5 L8.8 4.5 V16.8 L1.2 13.6 Z" fill="url(#bkg)" stroke="#b86f52" stroke-width="0.9"/><path d="M9 13 L13 9.2 V11.3 Q15.5 11.3 17 9.5 Q17 14.5 13 14.5 V16.8 Z" fill="#279a2a"/></svg><svg style="position:absolute;left:920px;top:238px;" width="18" height="18" viewBox="0 0 18 18"><defs><linearGradient id="bkg" x1="0" y1="0" x2="1" y2="1"><stop offset="0" stop-color="#fbd7b3"/><stop offset="1" stop-color="#d58a6c"/></linearGradient></defs><rect x="1.5" y="1.5" width="11" height="10" fill="#eee" stroke="#c08a70" stroke-width="0.9"/><rect x="9" y="2.5" width="2.5" height="9" fill="#dfe3e8"/><path d="M1.2 1.5 L8.8 4.5 V16.8 L1.2 13.6 Z" fill="url(#bkg)" stroke="#b86f52" stroke-width="0.9"/><path d="M17.2 13 L13 9.2 V11.3 H9 V14.7 H13 V16.8 Z" fill="#5536c8"/></svg><div class="t" style="left:955px;top:239px;line-height:18px;">Nombre de lignes à lire</div><div style="position:absolute;left:1087px;top:236px;width:197px;height:22px;background:#fff;border:1px solid #828282;box-sizing:border-box"></div><div class="t" style="left:1087px;top:239px;width:179px;text-align:right;line-height:18px">10000</div><div style="position:absolute;left:1268px;top:237px;width:15px;height:20px;background:linear-gradient(90deg,#f7f7f7,#e2e2e2);border-left:1px solid #828282;box-sizing:border-box"></div><div style="position:absolute;left:1268px;top:246px;width:15px;height:1px;background:#9a9a9a"></div><svg style="position:absolute;left:1272px;top:240px;" width="8" height="16" viewBox="0 0 8 16"><path d="M0.5 4.5H7.5L4 1Z" fill="#111"/><path d="M0.5 10.5H7.5L4 14Z" fill="#111"/></svg><div style="position:absolute;left:1549px;top:236px;width:72px;height:22px;box-sizing:border-box;border:1px solid #8a8a8a;background:linear-gradient(#fdfdfd,#e4e4e4);"></div><div class="t" style="left:1549px;top:237px;width:72px;text-align:center;line-height:22px">Paramètres</div><div style="position:absolute;left:651px;top:259px;width:971px;height:519px;background:#fff;border:1px solid #828282;box-sizing:border-box"></div><div style="position:absolute;left:652px;top:260px;width:954px;height:19px;background:#f1f5fa"></div><div style="position:absolute;left:652px;top:279px;width:954px;height:1px;background:#828282"></div><div class="t" style="left:652px;top:262px;width:113px;text-align:center;line-height:18px">Index</div><div class="t" style="left:765px;top:262px;width:214px;text-align:center;line-height:18px">Nom</div><div style="position:absolute;left:765px;top:260px;width:1px;height:20px;background:#828282"></div><div style="position:absolute;left:765px;top:280px;width:1px;height:270px;background:#eef2f7"></div><div style="position:absolute;left:764px;top:260px;width:1px;height:19px;background:#fafbfd"></div><div class="t" style="left:979px;top:262px;width:124px;text-align:center;line-height:18px">Importer</div><div style="position:absolute;left:979px;top:260px;width:1px;height:20px;background:#828282"></div><div style="position:absolute;left:979px;top:280px;width:1px;height:270px;background:#eef2f7"></div><div style="position:absolute;left:978px;top:260px;width:1px;height:19px;background:#fafbfd"></div><div class="t" style="left:1103px;top:262px;width:214px;text-align:center;line-height:18px">Nouveau nom</div><div style="position:absolute;left:1103px;top:260px;width:1px;height:20px;background:#828282"></div><div style="position:absolute;left:1103px;top:280px;width:1px;height:270px;background:#eef2f7"></div><div style="position:absolute;left:1102px;top:260px;width:1px;height:19px;background:#fafbfd"></div><div class="t" style="left:1317px;top:262px;width:144px;text-align:center;line-height:18px">Stockage</div><div style="position:absolute;left:1317px;top:260px;width:1px;height:20px;background:#828282"></div><div style="position:absolute;left:1317px;top:280px;width:1px;height:270px;background:#eef2f7"></div><div style="position:absolute;left:1316px;top:260px;width:1px;height:19px;background:#fafbfd"></div><div class="t" style="left:1461px;top:262px;width:145px;text-align:center;line-height:18px">Rôle</div><div style="position:absolute;left:1461px;top:260px;width:1px;height:20px;background:#828282"></div><div style="position:absolute;left:1461px;top:280px;width:1px;height:270px;background:#eef2f7"></div><div style="position:absolute;left:1460px;top:260px;width:1px;height:19px;background:#fafbfd"></div><div style="position:absolute;left:652px;top:297px;width:954px;height:1px;background:#eef2f7"></div><div class="t" style="left:653px;top:280px;line-height:18px;">1</div><div class="t" style="left:767px;top:280px;line-height:18px;">qnumq</div><svg style="position:absolute;left:1035px;top:282px;" width="12" height="12" viewBox="0 0 12 12"><rect x="0.5" y="0.5" width="11" height="11" fill="#fff" stroke="#7a7a7a"/><path d="M2.9 5.9 L5.2 8.9 L9.8 3.2" fill="none" stroke="#000" stroke-width="2.2"/></svg><div class="t" style="left:1105px;top:280px;line-height:18px;">qnumq</div><div class="t" style="left:1319px;top:280px;line-height:18px;">Entier</div><div class="t" style="left:1463px;top:281px;line-height:16px;font-family:'Liberation Serif',serif;font-size:16px;-webkit-text-stroke:0.15px #000">id</div><div class="t" style="left:1480px;top:280px;line-height:18px;">Identifiant</div><div style="position:absolute;left:652px;top:315px;width:954px;height:1px;background:#eef2f7"></div><div class="t" style="left:653px;top:298px;line-height:18px;">2</div><div class="t" style="left:767px;top:298px;line-height:18px;">sexe</div><svg style="position:absolute;left:1035px;top:300px;" width="12" height="12" viewBox="0 0 12 12"><rect x="0.5" y="0.5" width="11" height="11" fill="#fff" stroke="#7a7a7a"/><path d="M2.9 5.9 L5.2 8.9 L9.8 3.2" fill="none" stroke="#000" stroke-width="2.2"/></svg><div class="t" style="left:1105px;top:298px;line-height:18px;">sexe</div><div class="t" style="left:1319px;top:298px;line-height:18px;">Chaîne</div><svg style="position:absolute;left:1463px;top:299px;" width="16" height="16" viewBox="0 0 16 16"><defs><linearGradient id="ngy" x1="0" y1="0" x2="0" y2="1"><stop offset="0" stop-color="#f7d85a"/><stop offset="1" stop-color="#e8b612"/></linearGradient><linearGradient id="ngg" x1="0" y1="0" x2="1" y2="0"><stop offset="0" stop-color="#b9ef5a"/><stop offset="0.5" stop-color="#47b81e"/><stop offset="1" stop-color="#2f9a12"/></linearGradient></defs><path d="M1.2 7.8 Q2 1.2 9.5 0.8 Q12 0.8 13.4 1.8 L8.2 7.2 Z" fill="url(#ngy)"/><path d="M13.4 1.8 Q16.2 4.5 15.6 9 Q14.5 13.6 9.6 15 L8.6 7.6 Z" fill="url(#ngg)"/><path d="M0.3 10.6 L6.6 8.4 L6.9 15.4 Z" fill="#e42424"/></svg><div class="t" style="left:1483px;top:298px;line-height:18px;">Nominale</div><div style="position:absolute;left:652px;top:333px;width:954px;height:1px;background:#eef2f7"></div><div class="t" style="left:653px;top:316px;line-height:18px;">3</div><div class="t" style="left:767px;top:316px;line-height:18px;">aget</div><svg style="position:absolute;left:1035px;top:318px;" width="12" height="12" viewBox="0 0 12 12"><rect x="0.5" y="0.5" width="11" height="11" fill="#fff" stroke="#7a7a7a"/><path d="M2.9 5.9 L5.2 8.9 L9.8 3.2" fill="none" stroke="#000" stroke-width="2.2"/></svg><div class="t" style="left:1105px;top:316px;line-height:18px;">aget</div><div class="t" style="left:1319px;top:316px;line-height:18px;">Chaîne</div><svg style="position:absolute;left:1463px;top:317px;" width="16" height="16" viewBox="0 0 16 16"><defs><linearGradient id="ngy" x1="0" y1="0" x2="0" y2="1"><stop offset="0" stop-color="#f7d85a"/><stop offset="1" stop-color="#e8b612"/></linearGradient><linearGradient id="ngg" x1="0" y1="0" x2="1" y2="0"><stop offset="0" stop-color="#b9ef5a"/><stop offset="0.5" stop-color="#47b81e"/><stop offset="1" stop-color="#2f9a12"/></linearGradient></defs><path d="M1.2 7.8 Q2 1.2 9.5 0.8 Q12 0.8 13.4 1.8 L8.2 7.2 Z" fill="url(#ngy)"/><path d="M13.4 1.8 Q16.2 4.5 15.6 9 Q14.5 13.6 9.6 15 L8.6 7.6 Z" fill="url(#ngg)"/><path d="M0.3 10.6 L6.6 8.4 L6.9 15.4 Z" fill="#e42424"/></svg><div class="t" style="left:1483px;top:316px;line-height:18px;">Nominale</div><div style="position:absolute;left:652px;top:351px;width:954px;height:1px;background:#eef2f7"></div><div class="t" style="left:653px;top:334px;line-height:18px;">4</div><div class="t" style="left:767px;top:334px;line-height:18px;">matrim</div><svg style="position:absolute;left:1035px;top:336px;" width="12" height="12" viewBox="0 0 12 12"><rect x="0.5" y="0.5" width="11" height="11" fill="#fff" stroke="#7a7a7a"/><path d="M2.9 5.9 L5.2 8.9 L9.8 3.2" fill="none" stroke="#000" stroke-width="2.2"/></svg><div class="t" style="left:1105px;top:334px;line-height:18px;">matrim</div><div class="t" style="left:1319px;top:334px;line-height:18px;">Chaîne</div><svg style="position:absolute;left:1463px;top:335px;" width="16" height="16" viewBox="0 0 16 16"><defs><linearGradient id="ngy" x1="0" y1="0" x2="0" y2="1"><stop offset="0" stop-color="#f7d85a"/><stop offset="1" stop-color="#e8b612"/></linearGradient><linearGradient id="ngg" x1="0" y1="0" x2="1" y2="0"><stop offset="0" stop-color="#b9ef5a"/><stop offset="0.5" stop-color="#47b81e"/><stop offset="1" stop-color="#2f9a12"/></linearGradient></defs><path d="M1.2 7.8 Q2 1.2 9.5 0.8 Q12 0.8 13.4 1.8 L8.2 7.2 Z" fill="url(#ngy)"/><path d="M13.4 1.8 Q16.2 4.5 15.6 9 Q14.5 13.6 9.6 15 L8.6 7.6 Z" fill="url(#ngg)"/><path d="M0.3 10.6 L6.6 8.4 L6.9 15.4 Z" fill="#e42424"/></svg><div class="t" style="left:1483px;top:334px;line-height:18px;">Nominale</div><div style="position:absolute;left:652px;top:369px;width:954px;height:1px;background:#eef2f7"></div><div class="t" style="left:653px;top:352px;line-height:18px;">5</div><div class="t" style="left:767px;top:352px;line-height:18px;">pratique</div><svg style="position:absolute;left:1035px;top:354px;" width="12" height="12" viewBox="0 0 12 12"><rect x="0.5" y="0.5" width="11" height="11" fill="#fff" stroke="#7a7a7a"/><path d="M2.9 5.9 L5.2 8.9 L9.8 3.2" fill="none" stroke="#000" stroke-width="2.2"/></svg><div class="t" style="left:1105px;top:352px;line-height:18px;">pratique</div><div class="t" style="left:1319px;top:352px;line-height:18px;">Chaîne</div><svg style="position:absolute;left:1463px;top:353px;" width="16" height="16" viewBox="0 0 16 16"><defs><linearGradient id="ngy" x1="0" y1="0" x2="0" y2="1"><stop offset="0" stop-color="#f7d85a"/><stop offset="1" stop-color="#e8b612"/></linearGradient><linearGradient id="ngg" x1="0" y1="0" x2="1" y2="0"><stop offset="0" stop-color="#b9ef5a"/><stop offset="0.5" stop-color="#47b81e"/><stop offset="1" stop-color="#2f9a12"/></linearGradient></defs><path d="M1.2 7.8 Q2 1.2 9.5 0.8 Q12 0.8 13.4 1.8 L8.2 7.2 Z" fill="url(#ngy)"/><path d="M13.4 1.8 Q16.2 4.5 15.6 9 Q14.5 13.6 9.6 15 L8.6 7.6 Z" fill="url(#ngg)"/><path d="M0.3 10.6 L6.6 8.4 L6.9 15.4 Z" fill="#e42424"/></svg><div class="t" style="left:1483px;top:352px;line-height:18px;">Nominale</div><div style="position:absolute;left:652px;top:387px;width:954px;height:1px;background:#eef2f7"></div><div class="t" style="left:653px;top:370px;line-height:18px;">6</div><div class="t" style="left:767px;top:370px;line-height:18px;">enf</div><svg style="position:absolute;left:1035px;top:372px;" width="12" height="12" viewBox="0 0 12 12"><rect x="0.5" y="0.5" width="11" height="11" fill="#fff" stroke="#7a7a7a"/><path d="M2.9 5.9 L5.2 8.9 L9.8 3.2" fill="none" stroke="#000" stroke-width="2.2"/></svg><div class="t" style="left:1105px;top:370px;line-height:18px;">enf</div><div class="t" style="left:1319px;top:370px;line-height:18px;">Chaîne</div><svg style="position:absolute;left:1463px;top:371px;" width="16" height="16" viewBox="0 0 16 16"><defs><linearGradient id="ngy" x1="0" y1="0" x2="0" y2="1"><stop offset="0" stop-color="#f7d85a"/><stop offset="1" stop-color="#e8b612"/></linearGradient><linearGradient id="ngg" x1="0" y1="0" x2="1" y2="0"><stop offset="0" stop-color="#b9ef5a"/><stop offset="0.5" stop-color="#47b81e"/><stop offset="1" stop-color="#2f9a12"/></linearGradient></defs><path d="M1.2 7.8 Q2 1.2 9.5 0.8 Q12 0.8 13.4 1.8 L8.2 7.2 Z" fill="url(#ngy)"/><path d="M13.4 1.8 Q16.2 4.5 15.6 9 Q14.5 13.6 9.6 15 L8.6 7.6 Z" fill="url(#ngg)"/><path d="M0.3 10.6 L6.6 8.4 L6.9 15.4 Z" fill="#e42424"/></svg><div class="t" style="left:1483px;top:370px;line-height:18px;">Nominale</div><div style="position:absolute;left:652px;top:405px;width:954px;height:1px;background:#eef2f7"></div><div class="t" style="left:653px;top:388px;line-height:18px;">7</div><div class="t" style="left:767px;top:388px;line-height:18px;">activite</div><svg style="position:absolute;left:1035px;top:390px;" width="12" height="12" viewBox="0 0 12 12"><rect x="0.5" y="0.5" width="11" height="11" fill="#fff" stroke="#7a7a7a"/><path d="M2.9 5.9 L5.2 8.9 L9.8 3.2" fill="none" stroke="#000" stroke-width="2.2"/></svg><div class="t" style="left:1105px;top:388px;line-height:18px;">activite</div><div class="t" style="left:1319px;top:388px;line-height:18px;">Chaîne</div><svg style="position:absolute;left:1463px;top:389px;" width="16" height="16" viewBox="0 0 16 16"><defs><linearGradient id="ngy" x1="0" y1="0" x2="0" y2="1"><stop offset="0" stop-color="#f7d85a"/><stop offset="1" stop-color="#e8b612"/></linearGradient><linearGradient id="ngg" x1="0" y1="0" x2="1" y2="0"><stop offset="0" stop-color="#b9ef5a"/><stop offset="0.5" stop-color="#47b81e"/><stop offset="1" stop-color="#2f9a12"/></linearGradient></defs><path d="M1.2 7.8 Q2 1.2 9.5 0.8 Q12 0.8 13.4 1.8 L8.2 7.2 Z" fill="url(#ngy)"/><path d="M13.4 1.8 Q16.2 4.5 15.6 9 Q14.5 13.6 9.6 15 L8.6 7.6 Z" fill="url(#ngg)"/><path d="M0.3 10.6 L6.6 8.4 L6.9 15.4 Z" fill="#e42424"/></svg><div class="t" style="left:1483px;top:388px;line-height:18px;">Nominale</div><div style="position:absolute;left:652px;top:423px;width:954px;height:1px;background:#eef2f7"></div><div class="t" style="left:653px;top:406px;line-height:18px;">8</div><div class="t" style="left:767px;top:406px;line-height:18px;">prof</div><svg style="position:absolute;left:1035px;top:408px;" width="12" height="12" viewBox="0 0 12 12"><rect x="0.5" y="0.5" width="11" height="11" fill="#fff" stroke="#7a7a7a"/><path d="M2.9 5.9 L5.2 8.9 L9.8 3.2" fill="none" stroke="#000" stroke-width="2.2"/></svg><div class="t" style="left:1105px;top:406px;line-height:18px;">prof</div><div class="t" style="left:1319px;top:406px;line-height:18px;">Chaîne</div><svg style="position:absolute;left:1463px;top:407px;" width="16" height="16" viewBox="0 0 16 16"><defs><linearGradient id="ngy" x1="0" y1="0" x2="0" y2="1"><stop offset="0" stop-color="#f7d85a"/><stop offset="1" stop-color="#e8b612"/></linearGradient><linearGradient id="ngg" x1="0" y1="0" x2="1" y2="0"><stop offset="0" stop-color="#b9ef5a"/><stop offset="0.5" stop-color="#47b81e"/><stop offset="1" stop-color="#2f9a12"/></linearGradient></defs><path d="M1.2 7.8 Q2 1.2 9.5 0.8 Q12 0.8 13.4 1.8 L8.2 7.2 Z" fill="url(#ngy)"/><path d="M13.4 1.8 Q16.2 4.5 15.6 9 Q14.5 13.6 9.6 15 L8.6 7.6 Z" fill="url(#ngg)"/><path d="M0.3 10.6 L6.6 8.4 L6.9 15.4 Z" fill="#e42424"/></svg><div class="t" style="left:1483px;top:406px;line-height:18px;">Nominale</div><div style="position:absolute;left:652px;top:441px;width:954px;height:1px;background:#eef2f7"></div><div class="t" style="left:653px;top:424px;line-height:18px;">9</div><div class="t" style="left:767px;top:424px;line-height:18px;">dipl</div><svg style="position:absolute;left:1035px;top:426px;" width="12" height="12" viewBox="0 0 12 12"><rect x="0.5" y="0.5" width="11" height="11" fill="#fff" stroke="#7a7a7a"/><path d="M2.9 5.9 L5.2 8.9 L9.8 3.2" fill="none" stroke="#000" stroke-width="2.2"/></svg><div class="t" style="left:1105px;top:424px;line-height:18px;">dipl</div><div class="t" style="left:1319px;top:424px;line-height:18px;">Chaîne</div><svg style="position:absolute;left:1463px;top:425px;" width="16" height="16" viewBox="0 0 16 16"><defs><linearGradient id="ngy" x1="0" y1="0" x2="0" y2="1"><stop offset="0" stop-color="#f7d85a"/><stop offset="1" stop-color="#e8b612"/></linearGradient><linearGradient id="ngg" x1="0" y1="0" x2="1" y2="0"><stop offset="0" stop-color="#b9ef5a"/><stop offset="0.5" stop-color="#47b81e"/><stop offset="1" stop-color="#2f9a12"/></linearGradient></defs><path d="M1.2 7.8 Q2 1.2 9.5 0.8 Q12 0.8 13.4 1.8 L8.2 7.2 Z" fill="url(#ngy)"/><path d="M13.4 1.8 Q16.2 4.5 15.6 9 Q14.5 13.6 9.6 15 L8.6 7.6 Z" fill="url(#ngg)"/><path d="M0.3 10.6 L6.6 8.4 L6.9 15.4 Z" fill="#e42424"/></svg><div class="t" style="left:1483px;top:424px;line-height:18px;">Nominale</div><div style="position:absolute;left:652px;top:459px;width:954px;height:1px;background:#eef2f7"></div><div class="t" style="left:653px;top:442px;line-height:18px;">10</div><div class="t" style="left:767px;top:442px;line-height:18px;">vote</div><svg style="position:absolute;left:1035px;top:444px;" width="12" height="12" viewBox="0 0 12 12"><rect x="0.5" y="0.5" width="11" height="11" fill="#fff" stroke="#7a7a7a"/><path d="M2.9 5.9 L5.2 8.9 L9.8 3.2" fill="none" stroke="#000" stroke-width="2.2"/></svg><div class="t" style="left:1105px;top:442px;line-height:18px;">vote</div><div class="t" style="left:1319px;top:442px;line-height:18px;">Chaîne</div><svg style="position:absolute;left:1463px;top:443px;" width="16" height="16" viewBox="0 0 16 16"><defs><linearGradient id="ngy" x1="0" y1="0" x2="0" y2="1"><stop offset="0" stop-color="#f7d85a"/><stop offset="1" stop-color="#e8b612"/></linearGradient><linearGradient id="ngg" x1="0" y1="0" x2="1" y2="0"><stop offset="0" stop-color="#b9ef5a"/><stop offset="0.5" stop-color="#47b81e"/><stop offset="1" stop-color="#2f9a12"/></linearGradient></defs><path d="M1.2 7.8 Q2 1.2 9.5 0.8 Q12 0.8 13.4 1.8 L8.2 7.2 Z" fill="url(#ngy)"/><path d="M13.4 1.8 Q16.2 4.5 15.6 9 Q14.5 13.6 9.6 15 L8.6 7.6 Z" fill="url(#ngg)"/><path d="M0.3 10.6 L6.6 8.4 L6.9 15.4 Z" fill="#e42424"/></svg><div class="t" style="left:1483px;top:442px;line-height:18px;">Nominale</div><div style="position:absolute;left:652px;top:477px;width:954px;height:1px;background:#eef2f7"></div><div class="t" style="left:653px;top:460px;line-height:18px;">11</div><div class="t" style="left:767px;top:460px;line-height:18px;">habitat</div><svg style="position:absolute;left:1035px;top:462px;" width="12" height="12" viewBox="0 0 12 12"><rect x="0.5" y="0.5" width="11" height="11" fill="#fff" stroke="#7a7a7a"/><path d="M2.9 5.9 L5.2 8.9 L9.8 3.2" fill="none" stroke="#000" stroke-width="2.2"/></svg><div class="t" style="left:1105px;top:460px;line-height:18px;">habitat</div><div class="t" style="left:1319px;top:460px;line-height:18px;">Chaîne</div><svg style="position:absolute;left:1463px;top:461px;" width="16" height="16" viewBox="0 0 16 16"><defs><linearGradient id="ngy" x1="0" y1="0" x2="0" y2="1"><stop offset="0" stop-color="#f7d85a"/><stop offset="1" stop-color="#e8b612"/></linearGradient><linearGradient id="ngg" x1="0" y1="0" x2="1" y2="0"><stop offset="0" stop-color="#b9ef5a"/><stop offset="0.5" stop-color="#47b81e"/><stop offset="1" stop-color="#2f9a12"/></linearGradient></defs><path d="M1.2 7.8 Q2 1.2 9.5 0.8 Q12 0.8 13.4 1.8 L8.2 7.2 Z" fill="url(#ngy)"/><path d="M13.4 1.8 Q16.2 4.5 15.6 9 Q14.5 13.6 9.6 15 L8.6 7.6 Z" fill="url(#ngg)"/><path d="M0.3 10.6 L6.6 8.4 L6.9 15.4 Z" fill="#e42424"/></svg><div class="t" style="left:1483px;top:460px;line-height:18px;">Nominale</div><div style="position:absolute;left:652px;top:495px;width:954px;height:1px;background:#eef2f7"></div><div class="t" style="left:653px;top:478px;line-height:18px;">12</div><div class="t" style="left:767px;top:478px;line-height:18px;">localite</div><svg style="position:absolute;left:1035px;top:480px;" width="12" height="12" viewBox="0 0 12 12"><rect x="0.5" y="0.5" width="11" height="11" fill="#fff" stroke="#7a7a7a"/><path d="M2.9 5.9 L5.2 8.9 L9.8 3.2" fill="none" stroke="#000" stroke-width="2.2"/></svg><div class="t" style="left:1105px;top:478px;line-height:18px;">localite</div><div class="t" style="left:1319px;top:478px;line-height:18px;">Chaîne</div><svg style="position:absolute;left:1463px;top:479px;" width="16" height="16" viewBox="0 0 16 16"><defs><linearGradient id="ngy" x1="0" y1="0" x2="0" y2="1"><stop offset="0" stop-color="#f7d85a"/><stop offset="1" stop-color="#e8b612"/></linearGradient><linearGradient id="ngg" x1="0" y1="0" x2="1" y2="0"><stop offset="0" stop-color="#b9ef5a"/><stop offset="0.5" stop-color="#47b81e"/><stop offset="1" stop-color="#2f9a12"/></linearGradient></defs><path d="M1.2 7.8 Q2 1.2 9.5 0.8 Q12 0.8 13.4 1.8 L8.2 7.2 Z" fill="url(#ngy)"/><path d="M13.4 1.8 Q16.2 4.5 15.6 9 Q14.5 13.6 9.6 15 L8.6 7.6 Z" fill="url(#ngg)"/><path d="M0.3 10.6 L6.6 8.4 L6.9 15.4 Z" fill="#e42424"/></svg><div class="t" style="left:1483px;top:478px;line-height:18px;">Nominale</div><div style="position:absolute;left:652px;top:513px;width:954px;height:1px;background:#eef2f7"></div><div class="t" style="left:653px;top:496px;line-height:18px;">13</div><div class="t" style="left:767px;top:496px;line-height:18px;">revenu</div><svg style="position:absolute;left:1035px;top:498px;" width="12" height="12" viewBox="0 0 12 12"><rect x="0.5" y="0.5" width="11" height="11" fill="#fff" stroke="#7a7a7a"/><path d="M2.9 5.9 L5.2 8.9 L9.8 3.2" fill="none" stroke="#000" stroke-width="2.2"/></svg><div class="t" style="left:1105px;top:496px;line-height:18px;">revenu</div><div class="t" style="left:1319px;top:496px;line-height:18px;">Chaîne</div><svg style="position:absolute;left:1463px;top:497px;" width="16" height="16" viewBox="0 0 16 16"><defs><linearGradient id="ngy" x1="0" y1="0" x2="0" y2="1"><stop offset="0" stop-color="#f7d85a"/><stop offset="1" stop-color="#e8b612"/></linearGradient><linearGradient id="ngg" x1="0" y1="0" x2="1" y2="0"><stop offset="0" stop-color="#b9ef5a"/><stop offset="0.5" stop-color="#47b81e"/><stop offset="1" stop-color="#2f9a12"/></linearGradient></defs><path d="M1.2 7.8 Q2 1.2 9.5 0.8 Q12 0.8 13.4 1.8 L8.2 7.2 Z" fill="url(#ngy)"/><path d="M13.4 1.8 Q16.2 4.5 15.6 9 Q14.5 13.6 9.6 15 L8.6 7.6 Z" fill="url(#ngg)"/><path d="M0.3 10.6 L6.6 8.4 L6.9 15.4 Z" fill="#e42424"/></svg><div class="t" style="left:1483px;top:496px;line-height:18px;">Nominale</div><div style="position:absolute;left:652px;top:531px;width:954px;height:1px;background:#eef2f7"></div><div class="t" style="left:653px;top:514px;line-height:18px;">14</div><div class="t" style="left:767px;top:514px;line-height:18px;">region</div><svg style="position:absolute;left:1035px;top:516px;" width="12" height="12" viewBox="0 0 12 12"><rect x="0.5" y="0.5" width="11" height="11" fill="#fff" stroke="#7a7a7a"/><path d="M2.9 5.9 L5.2 8.9 L9.8 3.2" fill="none" stroke="#000" stroke-width="2.2"/></svg><div class="t" style="left:1105px;top:514px;line-height:18px;">region</div><div class="t" style="left:1319px;top:514px;line-height:18px;">Chaîne</div><svg style="position:absolute;left:1463px;top:515px;" width="16" height="16" viewBox="0 0 16 16"><defs><linearGradient id="ngy" x1="0" y1="0" x2="0" y2="1"><stop offset="0" stop-color="#f7d85a"/><stop offset="1" stop-color="#e8b612"/></linearGradient><linearGradient id="ngg" x1="0" y1="0" x2="1" y2="0"><stop offset="0" stop-color="#b9ef5a"/><stop offset="0.5" stop-color="#47b81e"/><stop offset="1" stop-color="#2f9a12"/></linearGradient></defs><path d="M1.2 7.8 Q2 1.2 9.5 0.8 Q12 0.8 13.4 1.8 L8.2 7.2 Z" fill="url(#ngy)"/><path d="M13.4 1.8 Q16.2 4.5 15.6 9 Q14.5 13.6 9.6 15 L8.6 7.6 Z" fill="url(#ngg)"/><path d="M0.3 10.6 L6.6 8.4 L6.9 15.4 Z" fill="#e42424"/></svg><div class="t" style="left:1483px;top:514px;line-height:18px;">Nominale</div><div style="position:absolute;left:652px;top:532px;width:954px;height:18px;background:#c3d3e9"></div><div style="position:absolute;left:765px;top:532px;width:1px;height:18px;background:#e9eff7"></div><div style="position:absolute;left:979px;top:532px;width:1px;height:18px;background:#e9eff7"></div><div style="position:absolute;left:1103px;top:532px;width:1px;height:18px;background:#e9eff7"></div><div style="position:absolute;left:1317px;top:532px;width:1px;height:18px;background:#e9eff7"></div><div style="position:absolute;left:1461px;top:532px;width:1px;height:18px;background:#e9eff7"></div><div style="position:absolute;left:652px;top:549px;width:954px;height:1px;background:#eef2f7"></div><div class="t" style="left:653px;top:532px;line-height:18px;">15</div><div class="t" style="left:767px;top:532px;line-height:18px;">K1</div><svg style="position:absolute;left:1035px;top:534px;" width="12" height="12" viewBox="0 0 12 12"><rect x="0.5" y="0.5" width="11" height="11" fill="#fff" stroke="#7a7a7a"/><path d="M2.9 5.9 L5.2 8.9 L9.8 3.2" fill="none" stroke="#000" stroke-width="2.2"/></svg><div class="t" style="left:1105px;top:532px;line-height:18px;">K1</div><div class="t" style="left:1319px;top:532px;line-height:18px;">Chaîne</div><svg style="position:absolute;left:1463px;top:533px;" width="16" height="16" viewBox="0 0 16 16"><defs><linearGradient id="tbg" x1="0" y1="0" x2="1" y2="1"><stop offset="0" stop-color="#8fc4ff"/><stop offset="0.45" stop-color="#2f7be6"/><stop offset="1" stop-color="#1a4fb8"/></linearGradient></defs><path d="M0.8 8 V10.2 L7.4 15.2 L15.2 8.6 V5.6 Z" fill="#1a3c8c"/><path d="M1.6 8.6 L7.4 12.6 L14.6 6.6" fill="none" stroke="#fff" stroke-width="2.1"/><path d="M0.8 7.6 L8.6 1 L15.2 5.2 L7.4 11.4 Z" fill="url(#tbg)" stroke="#173f9a" stroke-width="0.9"/></svg><div class="t" style="left:1483px;top:532px;line-height:18px;">Textuelle</div><div style="position:absolute;left:1606px;top:260px;width:15px;height:19px;background:linear-gradient(90deg,#f4f6f9,#e3e6eb);border-left:1px solid #828282;border-bottom:1px solid #828282;box-sizing:border-box"></div><svg style="position:absolute;left:1608px;top:262px;" width="12" height="13" viewBox="0 0 12 13"><path d="M1.5 10.5V2.5H10V6.5M1.5 4.5H10M5.5 2.5V6.5M1.5 10.5H4" stroke="#000" fill="none" stroke-width="1.1"/><path d="M4 7.5H11.5L7.75 11.5Z" fill="#000"/></svg><div style="position:absolute;left:1606px;top:280px;width:15px;height:497px;background:#f1f5fa;border-left:1px solid #828282;box-sizing:border-box"></div><div style="position:absolute;left:1606px;top:280px;width:15px;height:17px;background:linear-gradient(90deg,#f7f8fa,#e6e9ed);border-left:1px solid #828282;border-bottom:1px solid #b5b5b5;box-sizing:border-box"></div><svg style="position:absolute;left:1609px;top:284px;" width="10" height="6" viewBox="0 0 10 6"><path d="M0.5 5.5H9.5L5 1Z" fill="#111"/></svg><div style="position:absolute;left:1606px;top:760px;width:15px;height:17px;background:linear-gradient(90deg,#f7f8fa,#e6e9ed);border-left:1px solid #828282;border-top:1px solid #b5b5b5;box-sizing:border-box"></div><svg style="position:absolute;left:1609px;top:765px;" width="10" height="6" viewBox="0 0 10 6"><path d="M0.5 0.5H9.5L5 5Z" fill="#111"/></svg><svg style="position:absolute;left:651px;top:783px;" width="12" height="12" viewBox="0 0 12 12"><rect x="0.5" y="0.5" width="11" height="11" fill="#fff" stroke="#7a7a7a"/><path d="M2.9 5.9 L5.2 8.9 L9.8 3.2" fill="none" stroke="#000" stroke-width="2.2"/></svg><div class="t" style="left:668px;top:781px;line-height:18px;">Inclure les nouvelles colonnes automatiquement</div><svg style="position:absolute;left:651px;top:804px;" width="12" height="12" viewBox="0 0 12 12"><rect x="0.5" y="0.5" width="11" height="11" fill="#fff" stroke="#7a7a7a"/><path d="M2.9 5.9 L5.2 8.9 L9.8 3.2" fill="none" stroke="#000" stroke-width="2.2"/></svg><div class="t" style="left:668px;top:802px;line-height:18px;">Ordonner les modalités automatiquement suivant leur ordre naturel</div><svg style="position:absolute;left:1603px;top:781px;" width="18" height="17" viewBox="0 0 18 17"><rect x="1.5" y="0.5" width="8" height="8" fill="#fff" stroke="#111"/><rect x="8.5" y="7.5" width="8" height="8" fill="#fff" stroke="#111"/><path d="M10 11.5L12 13.5L15.5 9" stroke="#111" stroke-width="1.5" fill="none"/><path d="M11 1L15 5M11 1H13.5M11 1V3.5M1 9L5 13M5 13H2.5M5 13V10.5" stroke="#111" stroke-width="0.8"/></svg><div style="position:absolute;left:646px;top:825px;width:983px;height:1px;background:#828282"></div><svg style="position:absolute;left:652px;top:825px;" width="62" height="24" viewBox="0 0 62 24"><path d="M2 0.5 Q5 12 10 19.5 H54 Q58 19 60 13 L58 0.5" fill="#f1f5fa" stroke="#d8dce2"/><path d="M10 19.5H54Q58 19 60 13" fill="none" stroke="#828282"/></svg><svg style="position:absolute;left:705px;top:825px;" width="100" height="24" viewBox="0 0 100 24"><path d="M0.5 0.5 Q3 12 11 20.5 H86 Q89 20 90 14 L94 0.5" fill="#f1f5fa" stroke="#828282"/></svg><div style="position:absolute;left:705px;top:825px;width:90px;height:1px;background:#f1f5fa"></div><div class="t" style="left:661px;top:827px;line-height:18px;font-weight:bold;color:#2a5fa8">Import</div><div class="t" style="left:716px;top:827px;line-height:18px;font-weight:bold;color:#2a5fa8">Métadonnées</div><div style="position:absolute;left:1586px;top:544px;width:260px;height:123px;background:#f1f5fa;border:1px solid #979797;box-sizing:border-box;box-shadow:3px 3px 4px rgba(0,0,0,0.3)"></div><div class="t" style="left:1613px;top:550px;line-height:18px;">Importer</div><svg style="position:absolute;left:1820px;top:554px;" width="6" height="10" viewBox="0 0 6 10"><path d="M0.5 0.5V9.5L5.5 5Z" fill="#111"/></svg><div class="t" style="left:1613px;top:572px;line-height:18px;">Stockage</div><svg style="position:absolute;left:1820px;top:576px;" width="6" height="10" viewBox="0 0 6 10"><path d="M0.5 0.5V9.5L5.5 5Z" fill="#111"/></svg><div style="position:absolute;left:1593px;top:591px;width:242px;height:22px;background:#5a5a5a"></div><div class="t" style="left:1613px;top:593px;line-height:18px;color:#fff">Rôle</div><svg style="position:absolute;left:1820px;top:597px;" width="6" height="10" viewBox="0 0 6 10"><path d="M0.5 0.5V9.5L5.5 5Z" fill="#fff"/></svg><div style="position:absolute;left:1593px;top:616px;width:242px;height:1px;background:#c5c5c5"></div><div class="t" style="left:1613px;top:624px;line-height:18px;">Typage par défaut sur la sélection</div><div class="t" style="left:1613px;top:646px;line-height:18px;">Typage personnalisé sur la sélection</div><div style="position:absolute;left:1475px;top:588px;width:118px;height:117px;background:#f1f5fa;border:1px solid #979797;box-sizing:border-box;box-shadow:3px 3px 4px rgba(0,0,0,0.3)"></div><svg style="position:absolute;left:1480px;top:594px;" width="16" height="16" viewBox="0 0 16 16"><path d="M0.5 14.5H15.5" stroke="#3a78c0"/><rect x="0.5" y="7.5" width="4.5" height="7" fill="#a9cdf0" stroke="#3f7fc8" stroke-width="0.9"/><rect x="5.5" y="1.5" width="4.5" height="13" fill="#a9cdf0" stroke="#3f7fc8" stroke-width="0.9"/><rect x="10.5" y="8.5" width="4.5" height="6" fill="#a9cdf0" stroke="#3f7fc8" stroke-width="0.9"/></svg><div class="t" style="left:1502px;top:594px;line-height:18px;">Continue</div><svg style="position:absolute;left:1480px;top:616px;" width="16" height="16" viewBox="0 0 16 16"><defs><linearGradient id="ngy" x1="0" y1="0" x2="0" y2="1"><stop offset="0" stop-color="#f7d85a"/><stop offset="1" stop-color="#e8b612"/></linearGradient><linearGradient id="ngg" x1="0" y1="0" x2="1" y2="0"><stop offset="0" stop-color="#b9ef5a"/><stop offset="0.5" stop-color="#47b81e"/><stop offset="1" stop-color="#2f9a12"/></linearGradient></defs><path d="M1.2 7.8 Q2 1.2 9.5 0.8 Q12 0.8 13.4 1.8 L8.2 7.2 Z" fill="url(#ngy)"/><path d="M13.4 1.8 Q16.2 4.5 15.6 9 Q14.5 13.6 9.6 15 L8.6 7.6 Z" fill="url(#ngg)"/><path d="M0.3 10.6 L6.6 8.4 L6.9 15.4 Z" fill="#e42424"/></svg><div class="t" style="left:1502px;top:616px;line-height:18px;">Nominale</div><div style="position:absolute;left:1478px;top:635px;width:113px;height:22px;background:#5a5a5a"></div><svg style="position:absolute;left:1480px;top:638px;" width="16" height="16" viewBox="0 0 16 16"><defs><linearGradient id="tbg" x1="0" y1="0" x2="1" y2="1"><stop offset="0" stop-color="#8fc4ff"/><stop offset="0.45" stop-color="#2f7be6"/><stop offset="1" stop-color="#1a4fb8"/></linearGradient></defs><path d="M0.8 8 V10.2 L7.4 15.2 L15.2 8.6 V5.6 Z" fill="#1a3c8c"/><path d="M1.6 8.6 L7.4 12.6 L14.6 6.6" fill="none" stroke="#fff" stroke-width="2.1"/><path d="M0.8 7.6 L8.6 1 L15.2 5.2 L7.4 11.4 Z" fill="url(#tbg)" stroke="#173f9a" stroke-width="0.9"/></svg><div class="t" style="left:1502px;top:638px;line-height:18px;color:#fff">Textuelle</div><div class="t" style="left:1481px;top:660px;line-height:16px;font-family:'Liberation Serif',serif;font-size:16px;-webkit-text-stroke:0.15px #000">id</div><div class="t" style="left:1502px;top:660px;line-height:18px;">Identifiant</div><div class="t" style="left:1482px;top:681px;line-height:18px;font-family:'Liberation Serif',serif;font-size:16px;">?</div><div class="t" style="left:1502px;top:682px;line-height:18px;">Autre</div>
</body></html>
